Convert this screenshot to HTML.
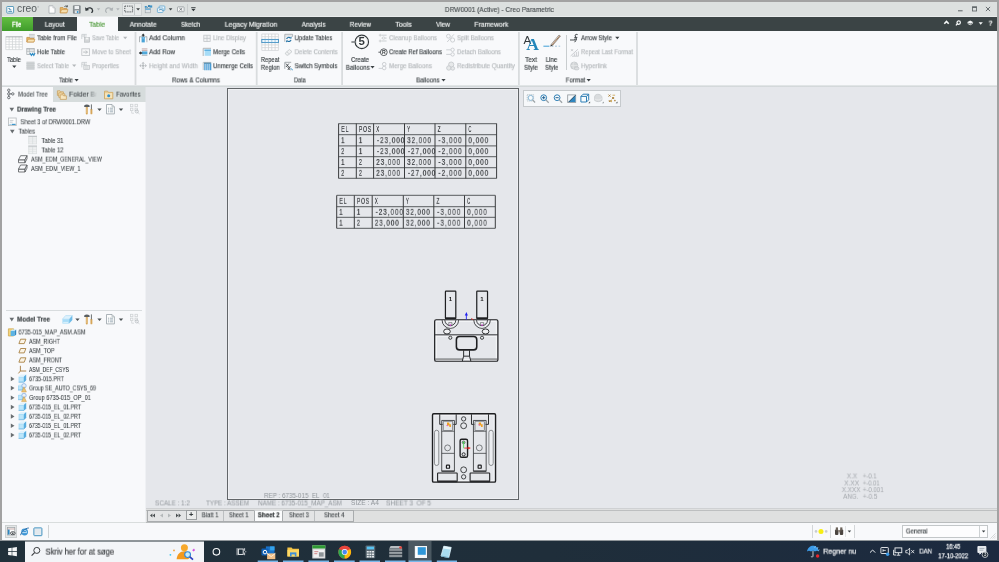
<!DOCTYPE html>
<html lang="en"><head><meta charset="utf-8"><title>DRW0001 (Active) - Creo Parametric</title>
<style>
html,body{margin:0;padding:0;}
body{width:999px;height:562px;overflow:hidden;background:#e5e7eb;font-family:"Liberation Sans",Arial,sans-serif;}
#app{position:relative;width:999px;height:562px;overflow:hidden;}
.t{will-change:transform;-webkit-text-stroke:.18px currentColor;}
.t{position:absolute;white-space:pre;line-height:10px;height:10px;color:#3c4245;transform-origin:0 50%;}
svg{overflow:visible;}
</style></head>
<body><div id="app">
<!-- window chrome -->
<div style="position:absolute;left:0px;top:0px;width:999px;height:541px;background:#e5e7eb;"></div>
<div style="position:absolute;left:2px;top:2px;width:995px;height:15.5px;background:#dce0df;"></div>
<div style="position:absolute;left:2px;top:16px;width:995px;height:1px;background:#e9ecec;"></div>
<div style="position:absolute;left:2px;top:17px;width:995px;height:13.5px;background:#3b4445;"></div>
<div style="position:absolute;left:2px;top:30.5px;width:995px;height:55.5px;background:#f8f9fb;"></div>
<div style="position:absolute;left:2px;top:85px;width:995px;height:2px;background:linear-gradient(#e8ebec,#cdd2d4);"></div>
<div style="position:absolute;left:2px;top:87px;width:143px;height:435px;background:#f8f9fb;"></div>
<div style="position:absolute;left:145px;top:87px;width:1px;height:435px;background:#eff1f4;"></div>
<div style="position:absolute;left:53px;top:87px;width:92px;height:15px;background:#d6dcdc;"></div>
<div style="position:absolute;left:145px;top:87px;width:1px;height:15px;background:#dde1e3;"></div>
<div style="position:absolute;left:146px;top:508px;width:851px;height:1px;background:#cfd1d3;"></div>
<div style="position:absolute;left:146px;top:509px;width:851px;height:13px;background:#dfe0e0;"></div>
<div style="position:absolute;left:146px;top:510px;width:851px;height:1px;background:#bdbfc0;"></div>
<div style="position:absolute;left:2px;top:522px;width:995px;height:18.5px;background:#f8f9fb;"></div>
<div style="position:absolute;left:2px;top:521.6px;width:144px;height:0.9px;background:#d9dddd;"></div>
<div style="position:absolute;left:146px;top:521.6px;width:851px;height:0.9px;background:#b9bcbd;"></div>
<div style="position:absolute;left:0px;top:0px;width:999px;height:2px;background:#a2a2a2;"></div>
<div style="position:absolute;left:0px;top:0px;width:2px;height:541px;background:#a2a2a2;"></div>
<div style="position:absolute;left:997px;top:0px;width:2px;height:541px;background:#a2a2a2;"></div>
<div style="position:absolute;left:0px;top:541px;width:999px;height:21px;background:linear-gradient(90deg,#20303a 0%,#1f2e3a 55%,#1c2a40 100%);"></div>
<div style="position:absolute;left:0px;top:540px;width:999px;height:1px;background:#8f9599;"></div>
<div class="titlebar">
<!-- title bar -->
<div class="t" style="left:444px;top:5px;font-size:7.8px;transform:translate(0.8px,0px) scaleX(0.851);color:#4f5557;">DRW0001 (Active) - Creo Parametric</div>
<div class="t" style="left:17px;top:3px;font-size:10px;transform:translate(0px,0.9px) scaleX(1.028);color:#545b5e;-webkit-text-stroke:0;">creo</div>
<svg style="position:absolute;left:37px;top:6px;" width="2" height="2" viewBox="0 0 2 2"><g transform="translate(0.4 0.2)"><circle cx=".7" cy=".7" r=".5" fill="none" stroke="#7a8184" stroke-width=".3"/></g></svg>
<div style="position:absolute;left:2px;top:17px;width:31px;height:13.5px;background:linear-gradient(#63be42,#3f9c2b);"></div>
<div style="position:absolute;left:77px;top:16.5px;width:40.5px;height:14px;background:#f8f9fb;"></div>
<div class="t" style="left:12px;top:19px;font-size:7.6px;transform:translate(0px,0.8px) scaleX(0.759);color:#ffffff;-webkit-text-stroke:.3px #fff;">File</div>
<div class="t" style="left:44px;top:19px;font-size:7.6px;transform:translate(0.7px,0.8px) scaleX(0.876);color:#f2f4f4;">Layout</div>
<div class="t" style="left:89px;top:19px;font-size:7.6px;transform:translate(0px,0.8px) scaleX(0.881);color:#4e9a3a;">Table</div>
<div class="t" style="left:129px;top:19px;font-size:7.6px;transform:translate(0.7px,0.8px) scaleX(0.887);color:#f2f4f4;">Annotate</div>
<div class="t" style="left:181px;top:19px;font-size:7.6px;transform:translate(0px,0.8px) scaleX(0.818);color:#f2f4f4;">Sketch</div>
<div class="t" style="left:224px;top:19px;font-size:7.6px;transform:translate(0.7px,0.8px) scaleX(0.909);color:#f2f4f4;">Legacy Migration</div>
<div class="t" style="left:301px;top:19px;font-size:7.6px;transform:translate(0.7px,0.8px) scaleX(0.848);color:#f2f4f4;">Analysis</div>
<div class="t" style="left:349px;top:19px;font-size:7.6px;transform:translate(0.7px,0.8px) scaleX(0.855);color:#f2f4f4;">Review</div>
<div class="t" style="left:395px;top:19px;font-size:7.6px;transform:translate(0.3px,0.8px) scaleX(0.924);color:#f2f4f4;">Tools</div>
<div class="t" style="left:436px;top:19px;font-size:7.6px;transform:translate(0px,0.8px) scaleX(0.857);color:#f2f4f4;">View</div>
<div class="t" style="left:474px;top:19px;font-size:7.6px;transform:translate(0.3px,0.8px) scaleX(0.895);color:#f2f4f4;">Framework</div>
<svg style="position:absolute;left:6px;top:6px;" width="9" height="8" viewBox="0 0 9 8"><g transform="translate(0.3 0)"><rect x=".5" y=".5" width="6.8" height="6.6" rx=".6" fill="#fbfdfe" stroke="#4a93b8" stroke-width=".9"/><path d="M2 2.4h1.4v1.4h1.6M2 5.4h3.8" stroke="#2f7ba3" stroke-width=".8" fill="none"/></g></svg>
<svg style="position:absolute;left:48px;top:5px;" width="8" height="9" viewBox="0 0 8 9"><g transform="translate(0.5 0.3)"><path d="M.5 .5H4.4L6.5 2.6V7.9H.5Z" fill="#fdfdfd" stroke="#a3a9ad" stroke-width=".8"/><path d="M4.4 .5V2.6H6.5" fill="#e4e7e9" stroke="#b4b9bc" stroke-width=".6"/></g></svg>
<svg style="position:absolute;left:59px;top:5px;" width="10" height="9" viewBox="0 0 10 9"><g transform="translate(0.8 0)"><path d="M.4 2.6H3.2L4 3.5H7V7.8H.4Z" fill="#e9b96a" stroke="#c48a3a" stroke-width=".7"/><path d="M.4 7.8L1.8 4.6H8.2L7 7.8Z" fill="#f6dfae" stroke="#c48a3a" stroke-width=".6"/><path d="M4.6 1.6C5.6 .8 6.6 .8 7.4 1.5M7.6 .3V1.8H6.1" stroke="#3c4245" stroke-width=".8" fill="none"/></g></svg>
<svg style="position:absolute;left:73px;top:5px;" width="8" height="9" viewBox="0 0 8 9"><g transform="translate(0 0.4)"><path d="M.4 .4H7.2V7.8H.4Z" fill="#8e9599" stroke="#6f777b" stroke-width=".7"/><rect x="1.6" y=".6" width="4.4" height="3" fill="#eef1f3"/><rect x="1.8" y="5" width="4" height="2.8" fill="#dfe3e5"/><rect x="3.9" y="5.6" width="1.4" height="2" fill="#3f9bd0"/></g></svg>
<svg style="position:absolute;left:85px;top:6px;" width="9" height="7" viewBox="0 0 9 7"><g transform="translate(0 0.4)"><path d="M1.6 2.8C3.6 .6 7.4 1.2 7.6 4.2C7.7 5.4 7 6 6.2 6" stroke="#33393c" stroke-width="1.3" fill="none"/><path d="M0 .8L.6 4.6L4.2 3.6Z" fill="#33393c"/></g></svg>
<svg style="position:absolute;left:96px;top:8px;" width="5" height="3" viewBox="0 0 5 3"><g transform="translate(0.8 0.3)"><path d="M0 0H3.4L1.7 2.2Z" fill="#b0b5b8"/></g></svg>
<svg style="position:absolute;left:104px;top:6px;" width="10" height="7" viewBox="0 0 10 7"><g transform="translate(0.6 0.4)"><path d="M7 2.8C5 .6 1.2 1.2 1 4.2C.9 5.4 1.6 6 2.4 6" stroke="#aeb3b6" stroke-width="1.2" fill="none"/><path d="M8.6 .8L8 4.6L4.4 3.6Z" fill="#aeb3b6"/></g></svg>
<svg style="position:absolute;left:116px;top:8px;" width="4" height="3" viewBox="0 0 4 3"><g transform="translate(0.2 0.3)"><path d="M0 0H3.4L1.7 2.2Z" fill="#b0b5b8"/></g></svg>
<div style="position:absolute;left:122px;top:3px;width:20px;height:13px;background:#e6e9e9;border:1px solid #cdd1d2;box-sizing:border-box;"></div>
<div style="position:absolute;left:134.2px;top:3.8px;width:0.8px;height:11px;background:#c3c8c9;"></div>
<svg style="position:absolute;left:124px;top:5px;" width="9" height="8" viewBox="0 0 9 8"><g transform="translate(0.3 0.6)"><rect x=".5" y=".5" width="7.8" height="5.8" fill="none" stroke="#3c4245" stroke-width=".9" stroke-dasharray="1.3 .9"/></g></svg>
<svg style="position:absolute;left:136px;top:8px;" width="4" height="3" viewBox="0 0 4 3"><g transform="translate(0.2 0.2)"><path d="M0 0H3.8L1.9 2.4Z" fill="#3c4245"/></g></svg>
<svg style="position:absolute;left:144px;top:5px;" width="9" height="9" viewBox="0 0 9 9"><g transform="translate(0.2 0)"><rect x="1" y="3.6" width="5.4" height="4.2" fill="#dfe4e7" stroke="#9aa1a5" stroke-width=".6"/><rect x="1" y="3.6" width="5.4" height="1.2" fill="#5aa7d6"/><path d="M3 2.6L5.4 .6M5.4 .6H3.8M5.4 .6V2.2" stroke="#2b78a8" stroke-width=".9" fill="none"/><rect x="5.6" y=".4" width="2.4" height="2.2" fill="#3f93c7"/><rect x=".6" y="1" width="2" height="1.8" fill="#3f93c7"/></g></svg>
<svg style="position:absolute;left:156px;top:5px;" width="10" height="9" viewBox="0 0 10 9"><g transform="translate(0.8 0.4)"><rect x="2.4" y=".6" width="5.6" height="4.4" rx=".6" fill="#eef6fb" stroke="#5aa3cf" stroke-width=".8"/><rect x=".6" y="2.6" width="5.6" height="4.4" rx=".6" fill="#f8fbfd" stroke="#5aa3cf" stroke-width=".8"/><path d="M2 4.8C3.4 3.8 5 4 6 5" stroke="#2b78a8" stroke-width=".8" fill="none"/></g></svg>
<svg style="position:absolute;left:168px;top:8px;" width="5" height="3" viewBox="0 0 5 3"><g transform="translate(0.8 0.2)"><path d="M0 0H3.6L1.8 2.3Z" fill="#3c4245"/></g></svg>
<svg style="position:absolute;left:177px;top:6px;" width="8" height="7" viewBox="0 0 8 7"><g transform="translate(0 0.4)"><rect x=".5" y=".5" width="6.6" height="4.8" rx=".5" fill="#f4f5f5" stroke="#8d9498" stroke-width=".7"/><path d="M2.4 1.7L5.2 4.1M5.2 1.7L2.4 4.1" stroke="#6a7175" stroke-width=".8"/></g></svg>
<div style="position:absolute;left:186.6px;top:4px;width:0.9px;height:10.8px;background:#c9cdce;"></div>
<svg style="position:absolute;left:191px;top:7px;" width="5" height="5" viewBox="0 0 5 5"><g transform="translate(0.2 0)"><path d="M0 0H4.4V.8H0ZM0 1.8H4.4L2.2 4.2Z" fill="#33393c"/></g></svg>
<svg style="position:absolute;left:958px;top:10px;" width="5" height="2" viewBox="0 0 5 2"><g transform="translate(0 0.3)"><rect width="4.6" height="1" fill="#5a6164"/></g></svg>
<svg style="position:absolute;left:972px;top:6px;" width="5" height="6" viewBox="0 0 5 6"><g transform="translate(0 0.4)"><rect x=".4" y=".4" width="4.2" height="4.2" fill="none" stroke="#5a6164" stroke-width=".8"/><rect x=".4" y=".4" width="4.2" height="1.1" fill="#5a6164"/></g></svg>
<svg style="position:absolute;left:985px;top:6px;" width="6" height="6" viewBox="0 0 6 6"><g transform="translate(0.6 0.6)"><path d="M.3 .3L4.5 4.5M4.5 .3L.3 4.5" stroke="#5a6164" stroke-width=".9"/></g></svg>
<svg style="position:absolute;left:943px;top:20px;" width="7" height="5" viewBox="0 0 7 5"><g transform="translate(0.8 0.6)"><path d="M.5 3.1L2.7 .9L4.9 3.1" stroke="#f7f9f9" stroke-width="1.6" fill="none"/></g></svg>
<svg style="position:absolute;left:955px;top:20px;" width="6" height="6" viewBox="0 0 6 6"><g transform="translate(0.4 0.4)"><circle cx="3.3" cy="2.2" r="1.7" fill="none" stroke="#f7f9f9" stroke-width="1.2"/><path d="M2.1 3.4L.5 5" stroke="#f7f9f9" stroke-width="1.3"/></g></svg>
<svg style="position:absolute;left:967px;top:20px;" width="7" height="6" viewBox="0 0 7 6"><g transform="translate(0 0.6)"><path d="M3.2 0L6.4 1.6L3.2 3.2L0 1.6Z" fill="#f4f6f6"/><path d="M.6 2.8L3.2 4.2L5.8 2.8" stroke="#f4f6f6" stroke-width=".8" fill="none"/></g></svg>
<svg style="position:absolute;left:978px;top:22px;" width="5" height="3" viewBox="0 0 5 3"><g transform="translate(0.6 0.2)"><path d="M0 0H4.2L2.1 2.6Z" fill="#f7f9f9"/></g></svg>
<div class="t" style="left:988px;top:18px;font-size:7.6px;transform:translate(0.6px,0.6px) scaleX(0.862);color:#f4f6f6;font-weight:700;">?</div>
</div>
<div class="ribbon">
<!-- ribbon -->
<svg style="position:absolute;left:134px;top:32px;" width="3" height="53" viewBox="0 0 3 53"><g transform="translate(0.6 0)"><rect width="1.8" height="53" fill="#d9dcde"/></g></svg>
<svg style="position:absolute;left:255px;top:32px;" width="3" height="53" viewBox="0 0 3 53"><g transform="translate(0.8 0)"><rect width="1.8" height="53" fill="#d9dcde"/></g></svg>
<svg style="position:absolute;left:341px;top:32px;" width="3" height="53" viewBox="0 0 3 53"><g transform="translate(0.2 0)"><rect width="1.8" height="53" fill="#d9dcde"/></g></svg>
<svg style="position:absolute;left:518px;top:32px;" width="2" height="53" viewBox="0 0 2 53"><rect width="1.8" height="53" fill="#d9dcde"/></svg>
<svg style="position:absolute;left:636px;top:32px;" width="2" height="53" viewBox="0 0 2 53"><g transform="translate(0.1 0)"><rect width="1.8" height="53" fill="#d9dcde"/></g></svg>
<div style="position:absolute;left:565.6px;top:35px;width:1px;height:35px;background:#c9cdcf;"></div>
<div class="t" style="left:37px;top:33px;font-size:7.4px;transform:translate(0px,0.2px) scaleX(0.824);">Table from File</div>
<div class="t" style="left:37px;top:47px;font-size:7.4px;transform:translate(0px,0.2px) scaleX(0.804);">Hole Table</div>
<div class="t" style="left:37px;top:61px;font-size:7.4px;transform:translate(0px,0.2px) scaleX(0.796);color:#b4b8bb;">Select Table</div>
<div class="t" style="left:92px;top:33px;font-size:7.4px;transform:translate(0px,0.2px) scaleX(0.740);color:#b4b8bb;">Save Table</div>
<div class="t" style="left:92px;top:47px;font-size:7.4px;transform:translate(0px,0.2px) scaleX(0.817);color:#b4b8bb;">Move to Sheet</div>
<div class="t" style="left:92px;top:61px;font-size:7.4px;transform:translate(0px,0.2px) scaleX(0.801);color:#b4b8bb;">Properties</div>
<div class="t" style="left:149px;top:33px;font-size:7.4px;transform:translate(0px,0.2px) scaleX(0.884);">Add Column</div>
<div class="t" style="left:149px;top:47px;font-size:7.4px;transform:translate(0px,0.2px) scaleX(0.866);">Add Row</div>
<div class="t" style="left:149px;top:61px;font-size:7.4px;transform:translate(0px,0.2px) scaleX(0.863);color:#b4b8bb;">Height and Width</div>
<div class="t" style="left:213px;top:33px;font-size:7.4px;transform:translate(0px,0.2px) scaleX(0.819);color:#b4b8bb;">Line Display</div>
<div class="t" style="left:213px;top:47px;font-size:7.4px;transform:translate(0px,0.2px) scaleX(0.811);">Merge Cells</div>
<div class="t" style="left:213px;top:61px;font-size:7.4px;transform:translate(0px,0.2px) scaleX(0.817);">Unmerge Cells</div>
<div class="t" style="left:294px;top:33px;font-size:7.4px;transform:translate(0.6px,0.2px) scaleX(0.799);">Update Tables</div>
<div class="t" style="left:294px;top:47px;font-size:7.4px;transform:translate(0.6px,0.2px) scaleX(0.812);color:#b4b8bb;">Delete Contents</div>
<div class="t" style="left:294px;top:61px;font-size:7.4px;transform:translate(0.6px,0.2px) scaleX(0.821);">Switch Symbols</div>
<div class="t" style="left:389px;top:33px;font-size:7.4px;transform:translate(0px,0.2px) scaleX(0.827);color:#b4b8bb;">Cleanup Balloons</div>
<div class="t" style="left:389px;top:47px;font-size:7.4px;transform:translate(0px,0.2px) scaleX(0.800);">Create Ref Balloons</div>
<div class="t" style="left:389px;top:61px;font-size:7.4px;transform:translate(0px,0.2px) scaleX(0.836);color:#b4b8bb;">Merge Balloons</div>
<div class="t" style="left:457px;top:33px;font-size:7.4px;transform:translate(0px,0.2px) scaleX(0.825);color:#b4b8bb;">Split Balloons</div>
<div class="t" style="left:457px;top:47px;font-size:7.4px;transform:translate(0px,0.2px) scaleX(0.816);color:#b4b8bb;">Detach Balloons</div>
<div class="t" style="left:457px;top:61px;font-size:7.4px;transform:translate(0px,0.2px) scaleX(0.839);color:#b4b8bb;">Redistribute Quantity</div>
<div class="t" style="left:581px;top:33px;font-size:7.4px;transform:translate(0px,0.2px) scaleX(0.819);">Arrow Style</div>
<div class="t" style="left:581px;top:47px;font-size:7.4px;transform:translate(0px,0.2px) scaleX(0.795);color:#b4b8bb;">Repeat Last Format</div>
<div class="t" style="left:581px;top:61px;font-size:7.4px;transform:translate(0px,0.2px) scaleX(0.843);color:#b4b8bb;">Hyperlink</div>
<div class="t" style="left:7px;top:55px;font-size:7.4px;transform:translate(0px,0px) scaleX(0.791);">Table</div>
<div class="t" style="left:260px;top:55px;font-size:7.4px;transform:translate(0.8px,0px) scaleX(0.779);">Repeat</div>
<div class="t" style="left:260px;top:62px;font-size:7.4px;transform:translate(0.8px,0.8px) scaleX(0.810);">Region</div>
<div class="t" style="left:351px;top:55px;font-size:7.4px;transform:translate(0px,0px) scaleX(0.810);">Create</div>
<div class="t" style="left:345px;top:62px;font-size:7.4px;transform:translate(0.8px,0.8px) scaleX(0.845);">Balloons</div>
<div class="t" style="left:525px;top:55px;font-size:7.4px;transform:translate(0px,0px) scaleX(0.884);">Text</div>
<div class="t" style="left:524px;top:62px;font-size:7.4px;transform:translate(0px,0.8px) scaleX(0.851);">Style</div>
<div class="t" style="left:545px;top:55px;font-size:7.4px;transform:translate(0.7px,0px) scaleX(0.836);">Line</div>
<div class="t" style="left:545px;top:62px;font-size:7.4px;transform:translate(0px,0.8px) scaleX(0.815);">Style</div>
<div class="t" style="left:59px;top:75px;font-size:7.4px;transform:translate(0px,0.4px) scaleX(0.791);">Table</div>
<div class="t" style="left:172px;top:75px;font-size:7.4px;transform:translate(0px,0.4px) scaleX(0.846);">Rows &amp; Columns</div>
<div class="t" style="left:293px;top:75px;font-size:7.4px;transform:translate(0.8px,0.4px) scaleX(0.768);">Data</div>
<div class="t" style="left:416px;top:75px;font-size:7.4px;transform:translate(0.2px,0.4px) scaleX(0.824);">Balloons</div>
<div class="t" style="left:565px;top:75px;font-size:7.4px;transform:translate(0.7px,0.4px) scaleX(0.841);">Format</div>
<svg style="position:absolute;left:12px;top:65px;" width="5" height="4" viewBox="0 0 4.72 3.77"><g transform="translate(0.17 0.5)"><path d="M0 0H4L2 2.4Z" fill="#3c4245"/></g></svg>
<svg style="position:absolute;left:74px;top:78px;" width="5" height="4" viewBox="0 0 4.72 3.77"><g transform="translate(0.45 0.88)"><path d="M0 0H4L2 2.4Z" fill="#3c4245"/></g></svg>
<svg style="position:absolute;left:441px;top:78px;" width="5" height="4" viewBox="0 0 4.72 3.77"><g transform="translate(0.36 0.88)"><path d="M0 0H4L2 2.4Z" fill="#3c4245"/></g></svg>
<svg style="position:absolute;left:586px;top:78px;" width="5" height="4" viewBox="0 0 4.72 3.77"><g transform="translate(0.55 0.88)"><path d="M0 0H4L2 2.4Z" fill="#3c4245"/></g></svg>
<svg style="position:absolute;left:370px;top:66px;" width="5" height="3" viewBox="0 0 4.72 2.83"><g transform="translate(0.36 0.03)"><path d="M0 0H4L2 2.4Z" fill="#3c4245"/></g></svg>
<svg style="position:absolute;left:72px;top:64px;" width="5" height="4" viewBox="0 0 4.72 3.77"><g transform="translate(0.08 0.5)"><path d="M0 0H4L2 2.4Z" fill="#b4b8bb"/></g></svg>
<svg style="position:absolute;left:123px;top:36px;" width="5" height="4" viewBox="0 0 4.72 3.77"><g transform="translate(0.08 0.69)"><path d="M0 0H4L2 2.4Z" fill="#b4b8bb"/></g></svg>
<svg style="position:absolute;left:615px;top:36px;" width="5" height="4" viewBox="0 0 4.72 3.77"><g transform="translate(0.17 0.69)"><path d="M0 0H4L2 2.4Z" fill="#3c4245"/></g></svg>
<svg style="position:absolute;left:5px;top:36px;" width="18" height="14" viewBox="0 0 18 14"><g transform="translate(0.8 0.6)"><rect width="16.6" height="13" fill="#fff"/><path d="M0 0V13M3.32 0V13M6.64 0V13M9.96 0V13M13.28 0V13M16.6 0V13M0 0H16.6M0 2.6H16.6M0 5.2H16.6M0 7.8H16.6M0 10.4H16.6M0 13H16.6" stroke="#d2d5d8" stroke-width="0.8" fill="none"/><path d="M0 .3H16.6" stroke="#a7adb1" stroke-width=".9"/></g></svg>
<svg style="position:absolute;left:26px;top:33px;" width="10" height="10" viewBox="0 0 10 10"><g transform="translate(0.4 0.8)"><path d="M2.6 .6H8.4M2.6 2.1H8.4M2.6 3.6H8.4" stroke="#9aa1a5" stroke-width=".55"/><path d="M.4 3.6H3L3.8 4.6H7.6V8.2H.4Z" fill="#e8b765" stroke="#c28a3c" stroke-width=".7"/><path d="M.5 8.2L1.8 5.4H8.5L7.4 8.2Z" fill="#f7e3b6" stroke="#c28a3c" stroke-width=".6"/></g></svg>
<svg style="position:absolute;left:26px;top:48px;" width="10" height="9" viewBox="0 0 10 9"><g transform="translate(0.4 0)"><rect x=".4" y=".4" width="7.4" height="6" fill="#f3f5f6" stroke="#9da3a7" stroke-width=".7"/><path d="M.4 1.8H7.8M.4 3.6H7.8M3 .4V6.4" stroke="#aab0b4" stroke-width=".6"/><path d="M3.6 5L5 7.4L6.2 5.6L7.4 7.4L8.6 5" stroke="#2f8ec8" stroke-width="1.1" fill="none"/></g></svg>
<svg style="position:absolute;left:26px;top:61px;" width="9" height="9" viewBox="0 0 9 9"><g transform="translate(0.4 0.6)"><rect width="8.2" height="8.2" fill="#cfd3d5"/><path d="M0 2H8.2M0 4.1H8.2M0 6.2H8.2" stroke="#c3c7ca" stroke-width=".6"/></g></svg>
<svg style="position:absolute;left:81px;top:34px;" width="10" height="9" viewBox="0 0 10 9"><g transform="translate(0.4 0)"><path d="M.4 .4H5.4M.4 2H5.4M.4 .4V5M2.8 .4V3.4" stroke="#c2c6c9" stroke-width=".7" fill="none"/><rect x="3.2" y="3.4" width="5" height="4.8" fill="#d3d6d8" stroke="#b9bec1" stroke-width=".7"/><rect x="4.4" y="3.6" width="2.6" height="1.8" fill="#f4f5f6"/></g></svg>
<svg style="position:absolute;left:81px;top:48px;" width="10" height="8" viewBox="0 0 10 8"><g transform="translate(0.4 0.4)"><rect x=".4" y=".4" width="7.8" height="6.6" fill="#f6f7f8" stroke="#c0c4c7" stroke-width=".8"/><path d="M1.8 3.7H6M4.4 2.1L6 3.7L4.4 5.3" stroke="#b4b9bc" stroke-width=".9" fill="none"/></g></svg>
<svg style="position:absolute;left:81px;top:61px;" width="10" height="9" viewBox="0 0 10 9"><g transform="translate(0.4 0.8)"><path d="M.4 .6H5.6M.4 2.4H5.6M.4 .6V5.6M3 .6V3.6" stroke="#c2c6c9" stroke-width=".7" fill="none"/><rect x="2.4" y="3.6" width="5.6" height="4" fill="#eceeef" stroke="#bfc3c6" stroke-width=".7"/><path d="M3.4 5H7M3.4 6.4H7" stroke="#c6cacd" stroke-width=".6"/></g></svg>
<svg style="position:absolute;left:139px;top:33px;" width="9" height="10" viewBox="0 0 9 10"><g transform="translate(0 0.6)"><path d="M.5 3V8.6M7.9 3V8.6M.5 3.2H8" stroke="#9da3a7" stroke-width=".8" fill="none"/><rect x="2.6" y="3.2" width="3.2" height="5.6" fill="#4aa3d6"/><path d="M4.2 3.2V5.2" stroke="#dff0fa" stroke-width=".5"/><path d="M4.2 0L6 2H5V3H3.4V2H2.4Z" fill="#33393c"/></g></svg>
<svg style="position:absolute;left:138px;top:48px;" width="10" height="8" viewBox="0 0 10 8"><g transform="translate(0.8 0.4)"><path d="M3 .5H8.6M3 2H8.6" stroke="#b18b86" stroke-width=".7"/><rect x="3" y="3" width="5.6" height="3" fill="#4fa8da"/><path d="M3 7H8.6" stroke="#9da3a7" stroke-width=".7"/><path d="M0 4.6L2 2.8V3.9H3.4V5.3H2V6.4Z" fill="#2a2f32"/></g></svg>
<svg style="position:absolute;left:139px;top:61px;" width="8" height="9" viewBox="0 0 8 9"><g transform="translate(0.2 0.8)"><path d="M3.9 0L5.5 1.9H2.3ZM3.9 7.8L5.5 5.9H2.3ZM0 3.9L1.9 2.3V5.5ZM7.8 3.9L5.9 2.3V5.5Z" fill="#b9bdc0"/><path d="M3.9 1.6V6.2M1.6 3.9H6.2" stroke="#c6cacd" stroke-width=".8"/><circle cx="3.9" cy="3.9" r="1.1" fill="#b4b9bc"/></g></svg>
<svg style="position:absolute;left:203px;top:34px;" width="8" height="8" viewBox="0 0 8 8"><g transform="translate(0.4 0.8)"><rect x=".4" y=".4" width="6.4" height="6.4" fill="#f1f2f3" stroke="#c3c7ca" stroke-width=".8"/><path d="M3.6 .4V6.8M.4 3.6H6.8" stroke="#c3c7ca" stroke-width=".8"/></g></svg>
<svg style="position:absolute;left:202px;top:47px;" width="10" height="10" viewBox="0 0 10 10"><g transform="translate(0.8 0.8)"><path d="M.4 8.2V.5H8.2" stroke="#9da3a7" stroke-width=".8" fill="none"/><rect x="1.6" y="1.8" width="6.6" height="6.2" fill="#a6dcf7"/><rect x="1.6" y="1.8" width="6.6" height="1.2" fill="#4fa8dc"/><path d="M1.8 3V8" stroke="#eef8fd" stroke-width=".6"/></g></svg>
<svg style="position:absolute;left:203px;top:61px;" width="9" height="10" viewBox="0 0 9 10"><g transform="translate(0 0.8)"><path d="M.2 8.2V.6H8.2" stroke="#a9afb3" stroke-width=".7" fill="none"/><rect x="1" y=".9" width="7.2" height="1" fill="#2d6f98"/><path d="M1.9 1.9V8.4M3.9 1.9V8.4M5.9 1.9V8.4M7.7 1.9V8.4" stroke="#2f8fd0" stroke-width="1.15"/></g></svg>
<svg style="position:absolute;left:261px;top:34px;" width="18" height="17" viewBox="0 0 18 17"><g transform="translate(0.8 0)"><rect width="16.6" height="16.4" fill="#fff"/><path d="M0 0V16.4M3.32 0V16.4M6.64 0V16.4M9.96 0V16.4M13.28 0V16.4M16.6 0V16.4M0 0H16.6M0 2.73H16.6M0 5.47H16.6M0 8.2H16.6M0 10.93H16.6M0 13.67H16.6M0 16.4H16.6" stroke="#d0d3d6" stroke-width="0.8" fill="none"/><rect x="0" y="5.4" width="16.6" height="3.2" fill="#eef6fc" stroke="#3f8fc2" stroke-width=".9"/><path d="M3.3 5.5V8.3M6.6 5.5V8.3M10 5.5V8.3M13.3 5.5V8.3" stroke="#6aaed6" stroke-width=".6"/></g></svg>
<svg style="position:absolute;left:284px;top:33px;" width="9" height="10" viewBox="0 0 9 10"><g transform="translate(0.4 0.8)"><path d="M.4 8V.5H8.2V3" stroke="#9da3a7" stroke-width=".8" fill="none"/><path d="M.4 2.2H8.2" stroke="#b9bec1" stroke-width=".6"/><path d="M2.2 5.2C2.6 3.6 4.6 3 5.8 4M6.6 6C6.2 7.6 4.2 8.2 3 7.2" stroke="#1f6fa3" stroke-width="1.1" fill="none"/><path d="M5 4.6L7.2 4.6L7 2.6ZM3.8 6.6L1.6 6.6L1.8 8.6Z" fill="#1f6fa3"/></g></svg>
<svg style="position:absolute;left:284px;top:49px;" width="9" height="7" viewBox="0 0 9 7"><g transform="translate(0.8 0)"><path d="M.4 4.2L4.6 .5L7.2 2.6L3.2 6.2H1.8Z" fill="#f0f1f2" stroke="#c2c6c9" stroke-width=".8"/><path d="M2 2.8L4.6 5" stroke="#c2c6c9" stroke-width=".7"/></g></svg>
<svg style="position:absolute;left:284px;top:61px;" width="10" height="10" viewBox="0 0 10 10"><g transform="translate(0.4 0.8)"><path d="M.4 7V.5H6.8" stroke="#8d9498" stroke-width=".8" fill="none"/><path d="M1.6 1.8L4.4 5.2M4.4 1.8L1.6 5.2M3 5L6 8.4M6 4.4L3.4 8.2" stroke="#33393c" stroke-width=".8"/><path d="M6 6.4L8.4 8.2" stroke="#2f8ec8" stroke-width=".9"/></g></svg>
<svg style="position:absolute;left:351px;top:34px;will-change:transform;" width="19" height="16" viewBox="0 0 19 16"><g transform="translate(0.4 0.2)"><circle cx="10.4" cy="7.7" r="6.7" fill="#fdfdfd" stroke="#33393c" stroke-width="1.2"/><circle cx="10.4" cy="7.7" r="5.6" fill="none" stroke="#d8dbdd" stroke-width=".7"/><path d="M0 7.8H3.2" stroke="#33393c" stroke-width="1"/><text x="10.4" y="11.3" font-size="10.2" font-family="Liberation Sans,Arial,sans-serif" font-weight="700" fill="#33393c" text-anchor="middle" transform="translate(10.4 0) scale(1.12 1) translate(-10.4 0)">5</text></g></svg>
<svg style="position:absolute;left:378px;top:33px;" width="10" height="10" viewBox="0 0 10 10"><g transform="translate(0.6 0.8)"><path d="M3 1.4H8M3 4.3H8M3 7.2H8" stroke="#c6cacd" stroke-width=".9"/><path d="M1.6 0V2.8M.2 1.4H3M1.6 5.8V8.6M.2 7.2H3" stroke="#c6cacd" stroke-width=".8"/><circle cx="5" cy="4.3" r="1.3" fill="#eef0f1" stroke="#c6cacd" stroke-width=".6"/></g></svg>
<svg style="position:absolute;left:378px;top:48px;will-change:transform;" width="10" height="9" viewBox="0 0 10 9"><g transform="translate(0.4 0.2)"><circle cx="5.4" cy="4" r="3.4" fill="#fdfdfd" stroke="#33393c" stroke-width=".8"/><path d="M0 4H2" stroke="#33393c" stroke-width=".8"/><text x="5.4" y="5.9" font-size="5.2" font-family="Liberation Sans,Arial,sans-serif" font-weight="700" fill="#33393c" text-anchor="middle">R</text></g></svg>
<svg style="position:absolute;left:378px;top:62px;" width="10" height="9" viewBox="0 0 10 9"><g transform="translate(0.6 0)"><circle cx="5.6" cy="2.2" r="1.8" fill="none" stroke="#c3c7ca" stroke-width=".8"/><circle cx="5.6" cy="6" r="1.8" fill="none" stroke="#c3c7ca" stroke-width=".8"/><path d="M0 6.4H3.6" stroke="#c3c7ca" stroke-width=".8"/></g></svg>
<svg style="position:absolute;left:446px;top:33px;" width="10" height="10" viewBox="0 0 10 10"><g transform="translate(0 0.8)"><circle cx="2.4" cy="2.4" r="1.9" fill="none" stroke="#c3c7ca" stroke-width=".8"/><circle cx="6.6" cy="6.2" r="2.1" fill="none" stroke="#c3c7ca" stroke-width=".8"/><path d="M7.8 .6L1.2 8.2" stroke="#c3c7ca" stroke-width=".8"/></g></svg>
<svg style="position:absolute;left:446px;top:47px;" width="10" height="10" viewBox="0 0 10 10"><g transform="translate(0.2 0.8)"><circle cx="6.4" cy="2" r="1.7" fill="none" stroke="#c3c7ca" stroke-width=".8"/><circle cx="6.4" cy="6.6" r="1.7" fill="none" stroke="#c3c7ca" stroke-width=".8"/><path d="M0 2H4.6M0 6.6H4.6" stroke="#c3c7ca" stroke-width=".8"/></g></svg>
<svg style="position:absolute;left:446px;top:61px;" width="10" height="10" viewBox="0 0 10 10"><g transform="translate(0.2 0.6)"><circle cx="5" cy="3" r="2.6" fill="#e7e9ea" stroke="#c3c7ca" stroke-width=".8"/><circle cx="2.6" cy="6.4" r="2.2" fill="#e7e9ea" stroke="#c3c7ca" stroke-width=".8"/><circle cx="6.6" cy="6.8" r="1.8" fill="#e7e9ea" stroke="#c3c7ca" stroke-width=".8"/></g></svg>
<svg style="position:absolute;left:523px;top:34px;will-change:transform;" width="16" height="17" viewBox="0 0 16 17"><g transform="translate(0.4 0)"><text x="0" y="10" font-size="11.5" font-family="Liberation Sans,Arial,sans-serif" fill="#33393c">A</text><text x="2.9" y="15.8" font-size="17.6" font-family="Liberation Serif,serif" font-weight="700" fill="#2386ba">A</text></g></svg>
<svg style="position:absolute;left:543px;top:33px;" width="19" height="16" viewBox="0 0 19 16"><g transform="translate(0 0.6)"><path d="M.4 12.6H6.4" stroke="#3f9fd6" stroke-width="1"/><path d="M8.6 12.6H10.4M12 12.6H14M15.6 12.6H17.2" stroke="#8fb9d3" stroke-width=".8"/><path d="M8 11L16 1.4L17.4 2.6L9.4 12.2Z" fill="#f4f1ee" stroke="#6a6059" stroke-width=".6"/><path d="M9 11.4L16.8 2.2" stroke="#9a6a42" stroke-width=".9"/><path d="M8 11L7.2 13L9.4 12.2Z" fill="#2b2f31"/></g></svg>
<svg style="position:absolute;left:570px;top:33px;" width="9" height="11" viewBox="0 0 9 11"><g transform="translate(0 0.6)"><path d="M0 6.4H5" stroke="#33393c" stroke-width=".9"/><path d="M7.6 1C5.4 .2 4.6 1.6 5.6 3.2C6.6 4.8 6.6 6.6 4.6 8.6" stroke="#33393c" stroke-width="1" fill="none"/><path d="M4.2 3.8H7.4M4 5.6H7" stroke="#33393c" stroke-width=".8"/></g></svg>
<svg style="position:absolute;left:570px;top:48px;" width="9" height="9" viewBox="0 0 9 9"><path d="M.6 8L8 1.2M2 8.2H8.4V3.4M1 1.2L3 3.2M3 1.2L1 3.2M4.4 8V5.6M6.4 8V4" stroke="#c6cacd" stroke-width=".9" fill="none"/></svg>
<svg style="position:absolute;left:570px;top:61px;" width="10" height="10" viewBox="0 0 10 10"><g transform="translate(0.2 0.6)"><circle cx="4" cy="4" r="3.6" fill="#d3d6d8" stroke="#c0c4c7" stroke-width=".7"/><path d="M.6 4H7.4M4 .4C2.4 2 2.4 6 4 7.6" stroke="#eceeef" stroke-width=".6" fill="none"/><rect x="4.4" y="5.4" width="4.2" height="2.8" rx="1.2" fill="#dfe1e3" stroke="#c0c4c7" stroke-width=".8"/></g></svg>
</div>
<div class="navigator">
<!-- left panel -->
<div class="t" style="left:18px;top:89px;font-size:7.4px;transform:translate(0px,0.6px) scaleX(0.810);-webkit-text-stroke:.08px currentColor;">Model Tree</div>
<div style="position:absolute;left:68px;top:88px;width:28.5px;height:12px;overflow:hidden;-webkit-mask-image:linear-gradient(90deg,#000 72%,transparent 100%);mask-image:linear-gradient(90deg,#000 72%,transparent 100%);"><div class="t" style="left:1px;top:1px;font-size:7.4px;transform:translate(0px,0.6px) scaleX(0.941);-webkit-text-stroke:.08px currentColor;">Folder Bro</div></div>
<div class="t" style="left:116px;top:89px;font-size:7.4px;transform:translate(0.2px,0.6px) scaleX(0.802);-webkit-text-stroke:.08px currentColor;">Favorites</div>
<div class="t" style="left:17px;top:104px;font-size:7.4px;transform:translate(0px,0.6px) scaleX(0.839);font-weight:700;">Drawing Tree</div>
<div class="t" style="left:20px;top:117px;font-size:7.4px;transform:translate(0.5px,0.2px) scaleX(0.783);-webkit-text-stroke:.08px currentColor;">Sheet 3 of DRW0001.DRW</div>
<div class="t" style="left:18px;top:126px;font-size:7.4px;transform:translate(0.5px,0.6px) scaleX(0.771);-webkit-text-stroke:.08px currentColor;">Tables</div>
<div class="t" style="left:41px;top:136px;font-size:7.4px;transform:translate(0.5px,0px) scaleX(0.786);-webkit-text-stroke:.08px currentColor;">Table 31</div>
<div class="t" style="left:41px;top:145px;font-size:7.4px;transform:translate(0.5px,0.4px) scaleX(0.786);-webkit-text-stroke:.08px currentColor;">Table 12</div>
<div class="t" style="left:31px;top:154px;font-size:7.4px;transform:translate(0px,0.6px) scaleX(0.716);-webkit-text-stroke:.08px currentColor;">ASM_EDM_GENERAL_VIEW</div>
<div class="t" style="left:31px;top:163px;font-size:7.4px;transform:translate(0px,0.9px) scaleX(0.729);-webkit-text-stroke:.08px currentColor;">ASM_EDM_VIEW_1</div>
<div style="position:absolute;left:6px;top:310.3px;width:136px;height:0.8px;background:#d8dcde;"></div>
<div class="t" style="left:17px;top:314px;font-size:7.4px;transform:translate(0px,0.6px) scaleX(0.854);font-weight:700;">Model Tree</div>
<div class="t" style="left:18px;top:327px;font-size:7.4px;transform:translate(0.5px,0.4px) scaleX(0.747);-webkit-text-stroke:.08px currentColor;">6735-015_MAP_ASM.ASM</div>
<div class="t" style="left:29px;top:336px;font-size:7.4px;transform:translate(0px,0.8px) scaleX(0.718);-webkit-text-stroke:.08px currentColor;">ASM_RIGHT</div>
<div class="t" style="left:29px;top:346px;font-size:7.4px;transform:translate(0px,0.1px) scaleX(0.724);-webkit-text-stroke:.08px currentColor;">ASM_TOP</div>
<div class="t" style="left:29px;top:355px;font-size:7.4px;transform:translate(0px,0.4px) scaleX(0.723);-webkit-text-stroke:.08px currentColor;">ASM_FRONT</div>
<div class="t" style="left:29px;top:365px;font-size:7.4px;transform:translate(0px,0px) scaleX(0.675);-webkit-text-stroke:.08px currentColor;">ASM_DEF_CSYS</div>
<div class="t" style="left:29px;top:374px;font-size:7.4px;transform:translate(0px,0.2px) scaleX(0.729);-webkit-text-stroke:.08px currentColor;">6735-015.PRT</div>
<div class="t" style="left:29px;top:383px;font-size:7.4px;transform:translate(0px,0.4px) scaleX(0.715);-webkit-text-stroke:.08px currentColor;">Group SE_AUTO_CSYS_69</div>
<div class="t" style="left:29px;top:393px;font-size:7.4px;transform:translate(0px,0px) scaleX(0.765);-webkit-text-stroke:.08px currentColor;">Group 6735-015_OP_01</div>
<div class="t" style="left:29px;top:402px;font-size:7.4px;transform:translate(0px,0.4px) scaleX(0.707);-webkit-text-stroke:.08px currentColor;">6735-015_EL_01.PRT</div>
<div class="t" style="left:29px;top:411px;font-size:7.4px;transform:translate(0px,0.7px) scaleX(0.707);-webkit-text-stroke:.08px currentColor;">6735-015_EL_02.PRT</div>
<div class="t" style="left:29px;top:421px;font-size:7.4px;transform:translate(0px,0px) scaleX(0.707);-webkit-text-stroke:.08px currentColor;">6735-015_EL_01.PRT</div>
<div class="t" style="left:29px;top:430px;font-size:7.4px;transform:translate(0px,0.4px) scaleX(0.707);-webkit-text-stroke:.08px currentColor;">6735-015_EL_02.PRT</div>
<svg style="position:absolute;left:9px;top:107px;" width="6" height="5" viewBox="0 0 6 5"><g transform="translate(0.5 0.8)"><path d="M0 0H4.6L2.3 3.6Z" fill="#686d70"/></g></svg>
<svg style="position:absolute;left:10px;top:129px;" width="5" height="5" viewBox="0 0 5 5"><g transform="translate(0 0.8)"><path d="M0 0H4.6L2.3 3.6Z" fill="#686d70"/></g></svg>
<svg style="position:absolute;left:9px;top:317px;" width="6" height="5" viewBox="0 0 6 5"><g transform="translate(0.5 0.8)"><path d="M0 0H4.6L2.3 3.6Z" fill="#686d70"/></g></svg>
<svg style="position:absolute;left:10px;top:376px;" width="5" height="6" viewBox="0 0 5 6"><g transform="translate(0.8 0.6)"><path d="M0 0L3.7 2.3L0 4.6Z" fill="#6a6f72"/></g></svg>
<svg style="position:absolute;left:10px;top:385px;" width="5" height="6" viewBox="0 0 5 6"><g transform="translate(0.8 0.8)"><path d="M0 0L3.7 2.3L0 4.6Z" fill="#6a6f72"/></g></svg>
<svg style="position:absolute;left:10px;top:395px;" width="5" height="6" viewBox="0 0 5 6"><g transform="translate(0.8 0.4)"><path d="M0 0L3.7 2.3L0 4.6Z" fill="#6a6f72"/></g></svg>
<svg style="position:absolute;left:10px;top:404px;" width="5" height="6" viewBox="0 0 5 6"><g transform="translate(0.8 0.8)"><path d="M0 0L3.7 2.3L0 4.6Z" fill="#6a6f72"/></g></svg>
<svg style="position:absolute;left:10px;top:414px;" width="5" height="5" viewBox="0 0 5 5"><g transform="translate(0.8 0.1)"><path d="M0 0L3.7 2.3L0 4.6Z" fill="#6a6f72"/></g></svg>
<svg style="position:absolute;left:10px;top:423px;" width="5" height="6" viewBox="0 0 5 6"><g transform="translate(0.8 0.4)"><path d="M0 0L3.7 2.3L0 4.6Z" fill="#6a6f72"/></g></svg>
<svg style="position:absolute;left:10px;top:432px;" width="5" height="6" viewBox="0 0 5 6"><g transform="translate(0.8 0.8)"><path d="M0 0L3.7 2.3L0 4.6Z" fill="#6a6f72"/></g></svg>
<svg style="position:absolute;left:97px;top:108px;" width="5" height="4" viewBox="0 0 5 4"><g transform="translate(0.3 0.4)"><path d="M0 0H4.4L2.2 2.7Z" fill="#4a5053"/></g></svg>
<svg style="position:absolute;left:118px;top:108px;" width="6" height="4" viewBox="0 0 6 4"><g transform="translate(0.8 0.4)"><path d="M0 0H4.4L2.2 2.7Z" fill="#4a5053"/></g></svg>
<svg style="position:absolute;left:75px;top:318px;" width="5" height="4" viewBox="0 0 5 4"><g transform="translate(0.3 0.4)"><path d="M0 0H4.4L2.2 2.7Z" fill="#4a5053"/></g></svg>
<svg style="position:absolute;left:97px;top:318px;" width="5" height="4" viewBox="0 0 5 4"><g transform="translate(0.3 0.4)"><path d="M0 0H4.4L2.2 2.7Z" fill="#4a5053"/></g></svg>
<svg style="position:absolute;left:118px;top:318px;" width="6" height="4" viewBox="0 0 6 4"><g transform="translate(0.8 0.4)"><path d="M0 0H4.4L2.2 2.7Z" fill="#4a5053"/></g></svg>
<svg style="position:absolute;left:7px;top:88px;" width="8" height="12" viewBox="0 0 8 12"><g transform="translate(0 0.6)"><g fill="#f8f9fb" stroke="#50565a" stroke-width=".8"><path d="M1.8 2.4V8.4M1.8 5.3H5" fill="none"/><circle cx="1.8" cy="1.6" r="1.2"/><circle cx="1.8" cy="5.3" r="1.2"/><circle cx="1.8" cy="9" r="1.2"/><circle cx="5.8" cy="5.3" r="1.2"/></g></g></svg>
<svg style="position:absolute;left:57px;top:89px;" width="10" height="11" viewBox="0 0 10 11"><g transform="translate(0 0.4)"><g stroke="#c49a55" stroke-width=".7"><path d="M.4 1.4H3L3.8 2.4H6.4V6H.4Z" fill="#f1d9a6"/><path d="M1.8 3.4H4.4L5.2 4.4H7.8V8H1.8Z" fill="#f4dfb3"/><path d="M3.2 5.4H5.8L6.6 6.4H9.4V10H3.2Z" fill="#f7e6c0"/></g></g></svg>
<svg style="position:absolute;left:104px;top:90px;" width="10" height="10" viewBox="0 0 10 10"><path d="M.5 1.2H3.6L4.4 2.4H8.8V8.8H.5Z" fill="#f6e3b8" stroke="#c9a057" stroke-width=".8"/><path d="M.5 2.6H8.8" stroke="#dcb877" stroke-width=".6"/><circle cx="4.7" cy="5.7" r="1.5" fill="#2d8fd0"/></svg>
<svg style="position:absolute;left:84px;top:104px;" width="10" height="11" viewBox="0 0 10 11"><path d="M2.8 2.8V9.4" stroke="#d6a65a" stroke-width="2" stroke-linecap="round"/><path d="M2.8 3.4V9" stroke="#ecd09a" stroke-width=".7"/><path d="M.2 1.4C1.6 .3 4 .3 5.6 1.4V3H.2Z" fill="#5a5f62"/><path d="M7.4 5.6V9.4" stroke="#d6a65a" stroke-width="1.9" stroke-linecap="round"/><path d="M7.4 .4V5.4" stroke="#6a6f72" stroke-width="1"/></svg>
<svg style="position:absolute;left:106px;top:104px;" width="9" height="11" viewBox="0 0 9 11"><path d="M.5 .5H6L8.4 2.9V9.9H.5Z" fill="#fbfcfc" stroke="#98a2a8" stroke-width=".8"/><path d="M6 .5V2.9H8.4" fill="none" stroke="#98a2a8" stroke-width=".6"/><path d="M2 4.2H3.2M4 4.2H7M2 6H3.2M4 6H7M2 7.8H3.2M4 7.8H7" stroke="#8d9da8" stroke-width=".8"/></svg>
<svg style="position:absolute;left:130px;top:103px;" width="11" height="12" viewBox="0 0 11 12"><g transform="translate(0 0.8)"><g stroke="#cfd3d5" stroke-width=".8" fill="none"><rect x=".5" y=".5" width="2.4" height="2.4"/><rect x=".5" y="4.4" width="2.4" height="2.4"/><rect x="5" y=".5" width="2.4" height="2.4"/><rect x="5" y="4.4" width="2.4" height="2.4"/><path d="M1.7 7V9.4H4M6.4 7.6L9.6 10.2"/><circle cx="6.8" cy="7.6" r="1.6" stroke="#b9bec1"/></g></g></svg>
<svg style="position:absolute;left:84px;top:314px;" width="10" height="11" viewBox="0 0 10 11"><path d="M2.8 2.8V9.4" stroke="#d6a65a" stroke-width="2" stroke-linecap="round"/><path d="M2.8 3.4V9" stroke="#ecd09a" stroke-width=".7"/><path d="M.2 1.4C1.6 .3 4 .3 5.6 1.4V3H.2Z" fill="#5a5f62"/><path d="M7.4 5.6V9.4" stroke="#d6a65a" stroke-width="1.9" stroke-linecap="round"/><path d="M7.4 .4V5.4" stroke="#6a6f72" stroke-width="1"/></svg>
<svg style="position:absolute;left:106px;top:314px;" width="9" height="11" viewBox="0 0 9 11"><path d="M.5 .5H6L8.4 2.9V9.9H.5Z" fill="#fbfcfc" stroke="#98a2a8" stroke-width=".8"/><path d="M6 .5V2.9H8.4" fill="none" stroke="#98a2a8" stroke-width=".6"/><path d="M2 4.2H3.2M4 4.2H7M2 6H3.2M4 6H7M2 7.8H3.2M4 7.8H7" stroke="#8d9da8" stroke-width=".8"/></svg>
<svg style="position:absolute;left:130px;top:313px;" width="11" height="12" viewBox="0 0 11 12"><g transform="translate(0 0.8)"><g stroke="#cfd3d5" stroke-width=".8" fill="none"><rect x=".5" y=".5" width="2.4" height="2.4"/><rect x=".5" y="4.4" width="2.4" height="2.4"/><rect x="5" y=".5" width="2.4" height="2.4"/><rect x="5" y="4.4" width="2.4" height="2.4"/><path d="M1.7 7V9.4H4M6.4 7.6L9.6 10.2"/><circle cx="6.8" cy="7.6" r="1.6" stroke="#b9bec1"/></g></g></svg>
<svg style="position:absolute;left:62px;top:315px;" width="11" height="10" viewBox="0 0 11 10"><path d="M.4 4.2L3.6 .6H10.4L7.2 4.2Z" fill="#def2fd" stroke="#9fd3f0" stroke-width=".5"/><path d="M.4 4.2H7.2V8.6H.4Z" fill="#a8dcf8"/><path d="M7.2 4.2L10.4 .6V5L7.2 8.6Z" fill="#6fbce8"/><path d="M1.2 7.4H6.2" stroke="#e8f6fd" stroke-width=".8"/></svg>
<svg style="position:absolute;left:8px;top:117px;" width="9" height="10" viewBox="0 0 9 10"><g transform="translate(0 0.6)"><rect x=".4" y=".4" width="7.8" height="7.6" fill="#fdfdfd" stroke="#b4b9bc" stroke-width=".8"/><path d="M1.8 3H5.4M1.8 4.6H4.6" stroke="#b9bec1" stroke-width=".7"/><path d="M3.6 6.8H7.6" stroke="#3f97cc" stroke-width="1.2"/><path d="M1.4 6.8H3" stroke="#7fbde0" stroke-width=".8"/></g></svg>
<svg style="position:absolute;left:28px;top:135px;" width="9" height="10" viewBox="0 0 9 10"><g transform="translate(0.4 0.8)"><rect width="8.4" height="8.4" fill="#f5f6f7"/><path d="M0 2.3H8.4M0 4.2H8.4M0 6.1H8.4M0 8H8.4M.3 0V8.4M8.1 0V8.4M4.2 1V8.4" stroke="#d9dcde" stroke-width=".7"/><path d="M0 .5H8.4" stroke="#b4b9bc" stroke-width="1"/></g></svg>
<svg style="position:absolute;left:28px;top:145px;" width="9" height="9" viewBox="0 0 9 9"><g transform="translate(0.4 0.6)"><rect width="8.4" height="8.4" fill="#f5f6f7"/><path d="M0 2.3H8.4M0 4.2H8.4M0 6.1H8.4M0 8H8.4M.3 0V8.4M8.1 0V8.4M4.2 1V8.4" stroke="#d9dcde" stroke-width=".7"/><path d="M0 .5H8.4" stroke="#b4b9bc" stroke-width="1"/></g></svg>
<svg style="position:absolute;left:18px;top:155px;" width="10" height="9" viewBox="0 0 10 9"><g transform="translate(0 0.2)"><g fill="#f8f9fb" stroke="#55595c" stroke-width=".8" stroke-linejoin="round"><path d="M.5 4.6H7V7.5H.5Z"/><path d="M.5 4.6L2.6 .5H9L7 4.6Z"/><path d="M7 4.6L9 .5V3.6L7 7.5Z"/></g></g></svg>
<svg style="position:absolute;left:18px;top:164px;" width="10" height="9" viewBox="0 0 10 9"><g transform="translate(0 0.5)"><g fill="#f8f9fb" stroke="#55595c" stroke-width=".8" stroke-linejoin="round"><path d="M.5 4.6H7V7.5H.5Z"/><path d="M.5 4.6L2.6 .5H9L7 4.6Z"/><path d="M7 4.6L9 .5V3.6L7 7.5Z"/></g></g></svg>
<svg style="position:absolute;left:8px;top:327px;" width="9" height="10" viewBox="0 0 9 10"><g transform="translate(0 0.6)"><path d="M.4 1.2H5.6V8.4H.4Z" fill="#f6d57a" stroke="#c9a046" stroke-width=".7"/><path d="M2.6 3.4H6.6V8.4H2.6Z" fill="#5ab4e6"/><path d="M2.6 3.4L4.2 1.8H8.2L6.6 3.4Z" fill="#c4e6f8"/><path d="M6.6 3.4L8.2 1.8V6.8L6.6 8.4Z" fill="#2f86bf"/></g></svg>
<svg style="position:absolute;left:18px;top:338px;" width="9" height="7" viewBox="0 0 9 7"><g transform="translate(0.4 0.7)"><path d="M2.2 .5H7.5L5.8 4.9H.5Z" fill="#fbf4e6" stroke="#a98244" stroke-width=".9" stroke-linejoin="round"/></g></svg>
<svg style="position:absolute;left:18px;top:348px;" width="9" height="6" viewBox="0 0 9 6"><g transform="translate(0.4 0)"><path d="M2.2 .5H7.5L5.8 4.9H.5Z" fill="#fbf4e6" stroke="#a98244" stroke-width=".9" stroke-linejoin="round"/></g></svg>
<svg style="position:absolute;left:18px;top:357px;" width="9" height="6" viewBox="0 0 9 6"><g transform="translate(0.4 0.3)"><path d="M2.2 .5H7.5L5.8 4.9H.5Z" fill="#fbf4e6" stroke="#a98244" stroke-width=".9" stroke-linejoin="round"/></g></svg>
<svg style="position:absolute;left:18px;top:365px;" width="9" height="9" viewBox="0 0 9 9"><g transform="translate(0 0.4)"><path d="M2.4 .4V5.6H8.2M2.4 5.6L.4 8" stroke="#a5793c" stroke-width=".9" fill="none"/></g></svg>
<svg style="position:absolute;left:18px;top:374px;" width="9" height="9" viewBox="0 0 9.47 9.47"><g transform="translate(0.63 0.53)"><path d="M0 2.2L5.6 2.2L5.6 8.2L0 8.2Z" fill="#a2daf7"/><path d="M0 2.2L2.2 0H8L5.6 2.2Z" fill="#e0f2fc"/><path d="M5.6 2.2L8 0V5.8L5.6 8.2Z" fill="#58ade0"/><path d="M.9 3.2H4.6V7.2H.9Z" fill="#c4e8fa" opacity=".8"/><path d="M0 8.2H5.6L8 5.8" stroke="#3f9ad4" stroke-width=".5" fill="none"/></g></svg>
<svg style="position:absolute;left:18px;top:402px;" width="9" height="9" viewBox="0 0 9.47 9.47"><g transform="translate(0.63 0.74)"><path d="M0 2.2L5.6 2.2L5.6 8.2L0 8.2Z" fill="#a2daf7"/><path d="M0 2.2L2.2 0H8L5.6 2.2Z" fill="#e0f2fc"/><path d="M5.6 2.2L8 0V5.8L5.6 8.2Z" fill="#58ade0"/><path d="M.9 3.2H4.6V7.2H.9Z" fill="#c4e8fa" opacity=".8"/><path d="M0 8.2H5.6L8 5.8" stroke="#3f9ad4" stroke-width=".5" fill="none"/></g></svg>
<svg style="position:absolute;left:18px;top:412px;" width="9" height="8" viewBox="0 0 9.47 8.42"><g transform="translate(0.63 0)"><path d="M0 2.2L5.6 2.2L5.6 8.2L0 8.2Z" fill="#a2daf7"/><path d="M0 2.2L2.2 0H8L5.6 2.2Z" fill="#e0f2fc"/><path d="M5.6 2.2L8 0V5.8L5.6 8.2Z" fill="#58ade0"/><path d="M.9 3.2H4.6V7.2H.9Z" fill="#c4e8fa" opacity=".8"/><path d="M0 8.2H5.6L8 5.8" stroke="#3f9ad4" stroke-width=".5" fill="none"/></g></svg>
<svg style="position:absolute;left:18px;top:421px;" width="9" height="9" viewBox="0 0 9.47 9.47"><g transform="translate(0.63 0.32)"><path d="M0 2.2L5.6 2.2L5.6 8.2L0 8.2Z" fill="#a2daf7"/><path d="M0 2.2L2.2 0H8L5.6 2.2Z" fill="#e0f2fc"/><path d="M5.6 2.2L8 0V5.8L5.6 8.2Z" fill="#58ade0"/><path d="M.9 3.2H4.6V7.2H.9Z" fill="#c4e8fa" opacity=".8"/><path d="M0 8.2H5.6L8 5.8" stroke="#3f9ad4" stroke-width=".5" fill="none"/></g></svg>
<svg style="position:absolute;left:18px;top:430px;" width="9" height="9" viewBox="0 0 9.47 9.47"><g transform="translate(0.63 0.74)"><path d="M0 2.2L5.6 2.2L5.6 8.2L0 8.2Z" fill="#a2daf7"/><path d="M0 2.2L2.2 0H8L5.6 2.2Z" fill="#e0f2fc"/><path d="M5.6 2.2L8 0V5.8L5.6 8.2Z" fill="#58ade0"/><path d="M.9 3.2H4.6V7.2H.9Z" fill="#c4e8fa" opacity=".8"/><path d="M0 8.2H5.6L8 5.8" stroke="#3f9ad4" stroke-width=".5" fill="none"/></g></svg>
<svg style="position:absolute;left:18px;top:383px;" width="7" height="8" viewBox="0 0 8.75 10"><g transform="translate(0 0.75)"><path d="M0 2.2L5.6 2.2L5.6 8.2L0 8.2Z" fill="#a2daf7"/><path d="M0 2.2L2.2 0H8L5.6 2.2Z" fill="#e0f2fc"/><path d="M5.6 2.2L8 0V5.8L5.6 8.2Z" fill="#58ade0"/><path d="M.9 3.2H4.6V7.2H.9Z" fill="#c4e8fa" opacity=".8"/><path d="M0 8.2H5.6L8 5.8" stroke="#3f9ad4" stroke-width=".5" fill="none"/></g></svg>
<svg style="position:absolute;left:21px;top:383px;" width="6" height="10" viewBox="0 0 6 10"><g transform="translate(0 0.4)"><circle cx="3" cy="2.4" r="2.2" fill="#e4effa" stroke="#7fa8de" stroke-width=".7"/><path d="M.6 8.6L3 3.4L5.4 8.6Z" fill="#ecc477" stroke="#c79a48" stroke-width=".5"/></g></svg>
<svg style="position:absolute;left:18px;top:393px;" width="7" height="7" viewBox="0 0 8.75 8.75"><g transform="translate(0 0.25)"><path d="M0 2.2L5.6 2.2L5.6 8.2L0 8.2Z" fill="#a2daf7"/><path d="M0 2.2L2.2 0H8L5.6 2.2Z" fill="#e0f2fc"/><path d="M5.6 2.2L8 0V5.8L5.6 8.2Z" fill="#58ade0"/><path d="M.9 3.2H4.6V7.2H.9Z" fill="#c4e8fa" opacity=".8"/><path d="M0 8.2H5.6L8 5.8" stroke="#3f9ad4" stroke-width=".5" fill="none"/></g></svg>
<svg style="position:absolute;left:21px;top:393px;" width="6" height="9" viewBox="0 0 6 9"><circle cx="3" cy="2.4" r="2.2" fill="#e4effa" stroke="#7fa8de" stroke-width=".7"/><path d="M.6 8.6L3 3.4L5.4 8.6Z" fill="#ecc477" stroke="#c79a48" stroke-width=".5"/></svg>
</div>
<div class="graphics">
<!-- drawing canvas -->
<div style="position:absolute;left:227px;top:88px;width:292px;height:412px;background:transparent;border:1px solid #626669;box-shadow:inset 0 0 0 1px rgba(255,255,255,.4);box-sizing:border-box;"></div>
<div style="position:absolute;left:523.3px;top:90.2px;width:97.6px;height:16.5px;background:#f6f8fa;border:1px solid #c6cacd;box-sizing:border-box;"></div>
<svg style="position:absolute;left:338px;top:123px;" width="159" height="56" viewBox="0 0 159 56"><g transform="translate(0.6 0.5)"><path d="M0 0H158M0 11.2H158M0 22.3H158M0 33.1H158M0 44H158M0 54.9H158" stroke="#74777a" stroke-width="1.25" fill="none"/><path d="M0 0V54.9M17.7 0V54.9M35 0V54.9M65.9 0V54.9M96.4 0V54.9M127.2 0V54.9M158 0V54.9" stroke="#3a3c3e" stroke-width="1" fill="none"/></g></svg>
<div class="t" style="left:341px;top:124px;font-size:9.2px;transform:translate(0.2px,0px) scaleX(0.576);color:#36393c;letter-spacing:1.4px;">EL</div>
<div class="t" style="left:358px;top:124px;font-size:9.2px;transform:translate(0.9px,0px) scaleX(0.554);color:#36393c;letter-spacing:1.4px;">POS</div>
<div class="t" style="left:376px;top:124px;font-size:9.2px;transform:translate(0.2px,0px) scaleX(0.489);color:#36393c;">X</div>
<div class="t" style="left:407px;top:124px;font-size:9.2px;transform:translate(0.1px,0px) scaleX(0.489);color:#36393c;">Y</div>
<div class="t" style="left:437px;top:124px;font-size:9.2px;transform:translate(0.6px,0px) scaleX(0.534);color:#36393c;">Z</div>
<div class="t" style="left:468px;top:124px;font-size:9.2px;transform:translate(0.4px,0px) scaleX(0.452);color:#36393c;">C</div>
<div class="t" style="left:341px;top:135px;font-size:9.2px;transform:translate(0px,0.15px) scaleX(0.704);color:#36393c;">1</div>
<div class="t" style="left:358px;top:135px;font-size:9.2px;transform:translate(0.7px,0.15px) scaleX(0.704);color:#36393c;">1</div>
<div class="t" style="left:377px;top:135px;font-size:9.2px;transform:translate(0px,0.15px) scaleX(0.690);color:#36393c;letter-spacing:1.4px;">-23,000</div>
<div class="t" style="left:407px;top:135px;font-size:9.2px;transform:translate(0.1px,0.15px) scaleX(0.681);color:#36393c;letter-spacing:1.4px;">32,000</div>
<div class="t" style="left:438px;top:135px;font-size:9.2px;transform:translate(0.4px,0.15px) scaleX(0.699);color:#36393c;letter-spacing:1.4px;">-3,000</div>
<div class="t" style="left:468px;top:135px;font-size:9.2px;transform:translate(0.4px,0.15px) scaleX(0.689);color:#36393c;letter-spacing:1.4px;">0,000</div>
<div class="t" style="left:341px;top:146px;font-size:9.2px;transform:translate(0.2px,0.1px) scaleX(0.586);color:#36393c;">2</div>
<div class="t" style="left:358px;top:146px;font-size:9.2px;transform:translate(0.7px,0.1px) scaleX(0.704);color:#36393c;">1</div>
<div class="t" style="left:377px;top:146px;font-size:9.2px;transform:translate(0px,0.1px) scaleX(0.690);color:#36393c;letter-spacing:1.4px;">-23,000</div>
<div class="t" style="left:407px;top:146px;font-size:9.2px;transform:translate(0.9px,0.1px) scaleX(0.690);color:#36393c;letter-spacing:1.4px;">-27,000</div>
<div class="t" style="left:438px;top:146px;font-size:9.2px;transform:translate(0.4px,0.1px) scaleX(0.699);color:#36393c;letter-spacing:1.4px;">-2,000</div>
<div class="t" style="left:468px;top:146px;font-size:9.2px;transform:translate(0.4px,0.1px) scaleX(0.689);color:#36393c;letter-spacing:1.4px;">0,000</div>
<div class="t" style="left:341px;top:156px;font-size:9.2px;transform:translate(0px,0.95px) scaleX(0.704);color:#36393c;">1</div>
<div class="t" style="left:358px;top:156px;font-size:9.2px;transform:translate(0.9px,0.95px) scaleX(0.586);color:#36393c;">2</div>
<div class="t" style="left:376px;top:156px;font-size:9.2px;transform:translate(0.2px,0.95px) scaleX(0.681);color:#36393c;letter-spacing:1.4px;">23,000</div>
<div class="t" style="left:407px;top:156px;font-size:9.2px;transform:translate(0.1px,0.95px) scaleX(0.681);color:#36393c;letter-spacing:1.4px;">32,000</div>
<div class="t" style="left:438px;top:156px;font-size:9.2px;transform:translate(0.4px,0.95px) scaleX(0.699);color:#36393c;letter-spacing:1.4px;">-3,000</div>
<div class="t" style="left:468px;top:156px;font-size:9.2px;transform:translate(0.4px,0.95px) scaleX(0.689);color:#36393c;letter-spacing:1.4px;">0,000</div>
<div class="t" style="left:341px;top:167px;font-size:9.2px;transform:translate(0.2px,0.85px) scaleX(0.586);color:#36393c;">2</div>
<div class="t" style="left:358px;top:167px;font-size:9.2px;transform:translate(0.9px,0.85px) scaleX(0.586);color:#36393c;">2</div>
<div class="t" style="left:376px;top:167px;font-size:9.2px;transform:translate(0.2px,0.85px) scaleX(0.681);color:#36393c;letter-spacing:1.4px;">23,000</div>
<div class="t" style="left:407px;top:167px;font-size:9.2px;transform:translate(0.9px,0.85px) scaleX(0.690);color:#36393c;letter-spacing:1.4px;">-27,000</div>
<div class="t" style="left:438px;top:167px;font-size:9.2px;transform:translate(0.4px,0.85px) scaleX(0.699);color:#36393c;letter-spacing:1.4px;">-2,000</div>
<div class="t" style="left:468px;top:167px;font-size:9.2px;transform:translate(0.4px,0.85px) scaleX(0.689);color:#36393c;letter-spacing:1.4px;">0,000</div>
<svg style="position:absolute;left:336px;top:195px;" width="160" height="34" viewBox="0 0 160 34"><g transform="translate(0.7 0.4)"><path d="M0 0H158.6M0 11.1H158.6M0 22H158.6M0 32.9H158.6" stroke="#74777a" stroke-width="1.25" fill="none"/><path d="M0 0V32.9M17.6 0V32.9M35.5 0V32.9M66.6 0V32.9M97.1 0V32.9M127.8 0V32.9M158.6 0V32.9" stroke="#3a3c3e" stroke-width="1" fill="none"/></g></svg>
<div class="t" style="left:339px;top:195px;font-size:9.2px;transform:translate(0.3px,0.85px) scaleX(0.576);color:#36393c;letter-spacing:1.4px;">EL</div>
<div class="t" style="left:356px;top:195px;font-size:9.2px;transform:translate(0.9px,0.85px) scaleX(0.554);color:#36393c;letter-spacing:1.4px;">POS</div>
<div class="t" style="left:374px;top:195px;font-size:9.2px;transform:translate(0.8px,0.85px) scaleX(0.489);color:#36393c;">X</div>
<div class="t" style="left:405px;top:195px;font-size:9.2px;transform:translate(0.9px,0.85px) scaleX(0.489);color:#36393c;">Y</div>
<div class="t" style="left:436px;top:195px;font-size:9.2px;transform:translate(0.4px,0.85px) scaleX(0.534);color:#36393c;">Z</div>
<div class="t" style="left:467px;top:195px;font-size:9.2px;transform:translate(0.1px,0.85px) scaleX(0.452);color:#36393c;">C</div>
<div class="t" style="left:339px;top:206px;font-size:9.2px;transform:translate(0.1px,0.85px) scaleX(0.704);color:#36393c;">1</div>
<div class="t" style="left:356px;top:206px;font-size:9.2px;transform:translate(0.7px,0.85px) scaleX(0.704);color:#36393c;">1</div>
<div class="t" style="left:375px;top:206px;font-size:9.2px;transform:translate(0.6px,0.85px) scaleX(0.690);color:#36393c;letter-spacing:1.4px;">-23,000</div>
<div class="t" style="left:405px;top:206px;font-size:9.2px;transform:translate(0.9px,0.85px) scaleX(0.681);color:#36393c;letter-spacing:1.4px;">32,000</div>
<div class="t" style="left:437px;top:206px;font-size:9.2px;transform:translate(0.2px,0.85px) scaleX(0.699);color:#36393c;letter-spacing:1.4px;">-3,000</div>
<div class="t" style="left:467px;top:206px;font-size:9.2px;transform:translate(0.1px,0.85px) scaleX(0.689);color:#36393c;letter-spacing:1.4px;">0,000</div>
<div class="t" style="left:339px;top:217px;font-size:9.2px;transform:translate(0.1px,0.75px) scaleX(0.704);color:#36393c;">1</div>
<div class="t" style="left:356px;top:217px;font-size:9.2px;transform:translate(0.9px,0.75px) scaleX(0.586);color:#36393c;">2</div>
<div class="t" style="left:374px;top:217px;font-size:9.2px;transform:translate(0.8px,0.75px) scaleX(0.681);color:#36393c;letter-spacing:1.4px;">23,000</div>
<div class="t" style="left:405px;top:217px;font-size:9.2px;transform:translate(0.9px,0.75px) scaleX(0.681);color:#36393c;letter-spacing:1.4px;">32,000</div>
<div class="t" style="left:437px;top:217px;font-size:9.2px;transform:translate(0.2px,0.75px) scaleX(0.699);color:#36393c;letter-spacing:1.4px;">-3,000</div>
<div class="t" style="left:467px;top:217px;font-size:9.2px;transform:translate(0.1px,0.75px) scaleX(0.689);color:#36393c;letter-spacing:1.4px;">0,000</div>
<div class="t" style="left:264px;top:491px;font-size:6.6px;transform:translate(0px,0px) scaleX(0.948);color:#92979c;-webkit-text-stroke:0;">REP : 6735-015_EL_01</div>
<div class="t" style="left:155px;top:498px;font-size:6.6px;transform:translate(0px,0.4px) scaleX(0.964);color:#92979c;-webkit-text-stroke:0;">SCALE : 1:2</div>
<div class="t" style="left:206px;top:498px;font-size:6.6px;transform:translate(0px,0.4px) scaleX(0.945);color:#92979c;-webkit-text-stroke:0;">TYPE : ASSEM</div>
<div class="t" style="left:258px;top:498px;font-size:6.6px;transform:translate(0px,0.4px) scaleX(0.950);color:#92979c;-webkit-text-stroke:0;">NAME : 6735-015_MAP_ASM</div>
<div class="t" style="left:351px;top:498px;font-size:6.6px;transform:translate(0px,0.4px) scaleX(1.004);color:#92979c;-webkit-text-stroke:0;">SIZE : A4</div>
<div class="t" style="left:386px;top:498px;font-size:6.6px;transform:translate(0px,0.4px) scaleX(0.984);color:#92979c;-webkit-text-stroke:0;">SHEET 3  OF 5</div>
<div class="t" style="left:846px;top:471px;font-size:6.7px;transform:translate(0.8px,0.4px) scaleX(0.963);color:#a3a7ac;-webkit-text-stroke:0;">X.X</div>
<div class="t" style="left:862px;top:471px;font-size:6.7px;transform:translate(0.8px,0.4px) scaleX(0.899);color:#a3a7ac;-webkit-text-stroke:0;">+-0.1</div>
<div class="t" style="left:844px;top:478px;font-size:6.7px;transform:translate(0.2px,0.5px) scaleX(0.982);color:#a3a7ac;-webkit-text-stroke:0;">X.XX</div>
<div class="t" style="left:862px;top:478px;font-size:6.7px;transform:translate(0.8px,0.5px) scaleX(0.870);color:#a3a7ac;-webkit-text-stroke:0;">+-0.01</div>
<div class="t" style="left:841px;top:485px;font-size:6.7px;transform:translate(0.8px,0.1px) scaleX(0.942);color:#a3a7ac;-webkit-text-stroke:0;">X.XXX</div>
<div class="t" style="left:862px;top:485px;font-size:6.7px;transform:translate(0.8px,0.1px) scaleX(0.904);color:#a3a7ac;-webkit-text-stroke:0;">+-0.001</div>
<div class="t" style="left:843px;top:491px;font-size:6.7px;transform:translate(0.2px,0.8px) scaleX(0.928);color:#a3a7ac;-webkit-text-stroke:0;">ANG.</div>
<div class="t" style="left:862px;top:491px;font-size:6.7px;transform:translate(0.8px,0.8px) scaleX(0.938);color:#a3a7ac;-webkit-text-stroke:0;">+-0.5</div>
<svg style="position:absolute;left:400px;top:270px;will-change:transform;" width="140" height="110" viewBox="0 0 714.98 561.77"><g fill="none" stroke="#1e1f21" stroke-width="6.2" stroke-linejoin="round"><rect x="185" y="262" width="307" height="196" rx="4" stroke="#f7f8f9" stroke-width="5"/><path d="M185 340H492" stroke="#f4f5f6" stroke-width="4"/><rect x="177" y="254" width="323" height="212" rx="8"/><path d="M180 455H322M358 455H497" stroke-width="4" stroke="#2a2c2e"/><path d="M177 331H500" stroke-width="5" stroke="#2e3032"/><path d="M215 256A42 42 0 0 0 299 256M229 256A28 28 0 0 0 285 256M377 256A42 42 0 0 0 461 256M391 256A28 28 0 0 0 447 256" stroke-width="4.5" stroke="#2e3032"/><path d="M222 258A35 35 0 0 0 292 258M384 258A35 35 0 0 0 454 258" stroke-width="3" stroke="#f4f5f6"/><rect x="232" y="108" width="53" height="140" rx="3" fill="#e5e7eb"/><rect x="392" y="108" width="55" height="140" rx="3" fill="#e5e7eb"/><path d="M232 243H285M392 243H447" stroke-width="4"/><path d="M238 266H279M398 266H441" stroke-width="4" stroke="#f7f8f9"/><ellipse cx="240" cy="314" rx="17" ry="13" stroke-width="5" stroke="#2a2c2e" fill="#f0f1f3"/><ellipse cx="437" cy="314" rx="17" ry="13" stroke-width="5" stroke="#2a2c2e" fill="#f0f1f3"/><circle cx="257" cy="346" r="8" stroke-width="4.5" stroke="#2a2c2e"/><circle cx="419" cy="346" r="8" stroke-width="4.5" stroke="#2a2c2e"/><rect x="288" y="340" width="104" height="68" rx="16" stroke-width="8"/><path d="M325 410V440L318 466M355 410V440L362 466M325 440H355" stroke-width="5" stroke="#26282a"/><rect x="249" y="268" width="16" height="16" stroke-width="3" stroke="#5a5d60"/><rect x="411" y="268" width="16" height="16" stroke-width="3" stroke="#5a5d60"/></g><circle cx="257" cy="281" r="4.5" fill="#d040d0"/><circle cx="419" cy="281" r="4.5" fill="#d040d0"/><path d="M339 254V226" stroke="#2222f0" stroke-width="4.5"/><path d="M331 232L339 214L347 232Z" fill="#2222f0"/><path d="M364 248L374 254" stroke="#d82020" stroke-width="5"/><text x="257" y="159" font-size="31" font-weight="700" font-family="Liberation Sans,Arial,sans-serif" fill="#1c1c1c" text-anchor="middle">1</text><text x="419" y="159" font-size="31" font-weight="700" font-family="Liberation Sans,Arial,sans-serif" fill="#1c1c1c" text-anchor="middle">1</text></svg>
<svg style="position:absolute;left:400px;top:395px;" width="140" height="110" viewBox="0 0 714.98 561.77"><g fill="none" stroke="#1e1f21" stroke-width="5" stroke-linejoin="round"><rect x="174" y="104" width="306" height="333" rx="3" stroke="#f4f5f6" stroke-width="4"/><rect x="166" y="96" width="322" height="349" rx="6" stroke-width="7"/><path d="M203 98V150H218M287 98V150H272M365 98V150H380M452 98V150H437" stroke-width="5" stroke="#2a2c2e"/><rect x="213" y="130" width="65" height="260" stroke="#3e4042" stroke-width="4.5"/><rect x="375" y="130" width="65" height="260" stroke="#3e4042" stroke-width="4.5"/><path d="M213 185H278M375 185H440M213 298H278M375 298H440" stroke="#3e4042" stroke-width="4"/><rect x="221" y="134" width="48" height="48" rx="4" stroke="#55585b" stroke-width="3.5"/><rect x="383" y="134" width="48" height="48" rx="4" stroke="#55585b" stroke-width="3.5"/><circle cx="243" cy="270" r="15" stroke="#4a4d50" stroke-width="3.5"/><circle cx="405" cy="270" r="15" stroke="#4a4d50" stroke-width="3.5"/><rect x="176" y="180" width="22" height="180" rx="11" stroke="#5f6265" stroke-width="3.5" fill="#eceef1"/><rect x="454" y="180" width="22" height="180" rx="11" stroke="#5f6265" stroke-width="3.5" fill="#eceef1"/><rect x="237" y="358" width="16" height="16" rx="3" stroke-width="6"/><rect x="399" y="358" width="16" height="16" rx="3" stroke-width="6"/><path d="M213 388H278M375 388H440" stroke-width="6" stroke="#2a2c2e"/><rect x="192" y="398" width="100" height="45" rx="3" stroke-width="5.5" fill="#e5e7eb"/><rect x="358" y="398" width="100" height="45" rx="3" stroke-width="5.5" fill="#e5e7eb"/><path d="M194 440H290M360 440H456" stroke-width="6"/><circle cx="325" cy="122" r="11" stroke-width="4.5" stroke="#2e3032"/><circle cx="325" cy="157" r="15" stroke-width="4.5" stroke="#2e3032"/><circle cx="325" cy="382" r="15" stroke-width="4.5" stroke="#2e3032"/><circle cx="325" cy="418" r="11" stroke-width="4.5" stroke="#2e3032"/><rect x="307" y="226" width="38" height="92" rx="8" stroke-width="7"/><circle cx="325" cy="303" r="8" stroke-width="4.5"/><circle cx="325" cy="242" r="7" stroke-width="3"/></g><circle cx="325" cy="242" r="5" fill="#3bd04a"/><path d="M325 248V272" stroke="#4be05a" stroke-width="4.5"/><path d="M328 271H352" stroke="#e82828" stroke-width="4.5"/><path d="M348 264L362 271L348 278Z" fill="#e82828"/><path d="M240 140h12v10h8v14h-8v-8h-12Z" fill="#f0a020"/><path d="M402 140h12v10h8v14h-8v-8h-12Z" fill="#f0a020"/><circle cx="241" cy="156" r="4" fill="#e060c0"/><circle cx="405" cy="152" r="4" fill="#e060c0"/></svg>
<svg style="position:absolute;left:526px;top:94px;" width="10" height="10" viewBox="0 0 10 10"><g transform="translate(0.7 0.1)"><rect x=".5" y=".5" width="6.4" height="6.4" fill="#eef4f8" stroke="#a9b4bb" stroke-width=".7" stroke-dasharray="1.2 .8"/><circle cx="4" cy="3.8" r="2.5" fill="#f7fbfd" stroke="#7fb0cf" stroke-width=".9"/><path d="M5.8 5.8L8.4 8.4" stroke="#9aa1a5" stroke-width="1.2"/></g></svg>
<svg style="position:absolute;left:540px;top:94px;" width="10" height="10" viewBox="0 0 10 10"><g transform="translate(0.1 0.1)"><circle cx="3.6" cy="3.6" r="2.9" fill="#f7fbfd" stroke="#2f7fb5" stroke-width="1"/><path d="M2 3.6H5.2M3.6 2V5.2" stroke="#1f5f8f" stroke-width="1"/><path d="M5.8 5.8L8.6 8.6" stroke="#9aa1a5" stroke-width="1.3"/></g></svg>
<svg style="position:absolute;left:553px;top:94px;" width="10" height="10" viewBox="0 0 10 10"><g transform="translate(0.5 0.1)"><circle cx="3.6" cy="3.6" r="2.9" fill="#f7fbfd" stroke="#2f7fb5" stroke-width="1"/><path d="M2 3.6H5.2" stroke="#1f5f8f" stroke-width="1"/><path d="M5.8 5.8L8.6 8.6" stroke="#9aa1a5" stroke-width="1.3"/></g></svg>
<svg style="position:absolute;left:567px;top:94px;" width="10" height="10" viewBox="0 0 10 10"><g transform="translate(0.2 0.1)"><rect x=".5" y=".8" width="8" height="7.6" fill="#f4f8fb" stroke="#8e9599" stroke-width=".8"/><path d="M8.2 1.2V8H1.4Z" fill="#2f86bf"/><path d="M8.2 1.2L1.4 8" stroke="#1c3f58" stroke-width=".9"/></g></svg>
<svg style="position:absolute;left:580px;top:93px;" width="11" height="11" viewBox="0 0 11 11"><g transform="translate(0.3 0.6)"><path d="M.6 2.8H6.2V8.4H.6Z" fill="#f7fbfd" stroke="#2f7fb5" stroke-width="1"/><path d="M.6 2.8L2.8 .6H8.4L6.2 2.8M8.4 .6V6.2L6.2 8.4" fill="none" stroke="#2f7fb5" stroke-width="1"/><path d="M8 9.6H9.8V7.8Z" fill="#4a5053"/></g></svg>
<svg style="position:absolute;left:594px;top:93px;" width="10" height="11" viewBox="0 0 10 11"><g transform="translate(0 0.6)"><path d="M.6 3.2C.6 1.2 3 .4 5 .8C7 1.2 8.2 2.6 8 4.6V6.6C6 8.6 2.6 8.4 .6 6.8Z" fill="#d9dcde" stroke="#c3c7ca" stroke-width=".7"/><path d="M.8 5.4C3 6.8 6 6.6 8 5" stroke="#eceeef" stroke-width=".8" fill="none"/><path d="M8 9.6H9.8V7.8Z" fill="#8d9498"/></g></svg>
<svg style="position:absolute;left:607px;top:93px;" width="11" height="11" viewBox="0 0 11 11"><g transform="translate(0.5 0.6)"><g stroke="#a87b2e" stroke-width=".9"><path d="M1 1L3 3M3 1L1 3M4.6 3.4L6.6 5.4M6.6 3.4L4.6 5.4M1.4 6.6L3.2 8.4M3.2 6.6L1.4 8.4"/></g><path d="M5 1.6H7.6M4 6V8.6" stroke="#c9a046" stroke-width=".8"/><circle cx="7.4" cy="7" r=".8" fill="#a87b2e"/><path d="M8.2 9.6H10V7.8Z" fill="#4a5053"/></g></svg>
</div>
<div class="statusbar">
<!-- sheet tabs / status bar / taskbar -->
<div style="position:absolute;left:147px;top:510px;width:207px;height:12px;background:#e3e4e5;border:1px solid #a9acae;box-sizing:border-box;"></div>
<div style="position:absolute;left:186px;top:510px;width:11px;height:10px;background:#ebecec;border:1px solid #9b9ea0;box-sizing:border-box;"></div>
<div style="position:absolute;left:254px;top:510px;width:29px;height:12px;background:#fbfcfd;border:1px solid #a9acae;border-top-color:#d5d7d8;box-sizing:border-box;"></div>
<div style="position:absolute;left:223px;top:511px;width:1px;height:10px;background:#bcbfc1;"></div>
<div style="position:absolute;left:314px;top:511px;width:1px;height:10px;background:#bcbfc1;"></div>
<div class="t" style="left:201px;top:510px;font-size:7.2px;transform:translate(0.7px,0.3px) scaleX(0.823);color:#4a4f52;">Blatt 1</div>
<div class="t" style="left:229px;top:510px;font-size:7.2px;transform:translate(0px,0.3px) scaleX(0.790);color:#4a4f52;">Sheet 1</div>
<div class="t" style="left:257px;top:510px;font-size:7.2px;transform:translate(0.8px,0.3px) scaleX(0.855);color:#2c3032;font-weight:700;">Sheet 2</div>
<div class="t" style="left:289px;top:510px;font-size:7.2px;transform:translate(0px,0.3px) scaleX(0.806);color:#4a4f52;">Sheet 3</div>
<div class="t" style="left:324px;top:510px;font-size:7.2px;transform:translate(0px,0.3px) scaleX(0.826);color:#4a4f52;">Sheet 4</div>
<div class="t" style="left:189px;top:510px;font-size:7.4px;transform:translate(0.2px,0px) scaleX(0.926);color:#33393c;font-weight:700;">+</div>
<svg style="position:absolute;left:150px;top:513px;" width="5" height="5" viewBox="0 0 5 5"><g transform="translate(0 0.6)"><path d="M2.4 0V4L0 2ZM5 0V4L2.6 2Z" fill="#4a4f52"/></g></svg>
<svg style="position:absolute;left:160px;top:513px;" width="3" height="5" viewBox="0 0 3 5"><g transform="translate(0 0.6)"><path d="M3 0V4L0 2Z" fill="#b4b8ba"/></g></svg>
<svg style="position:absolute;left:168px;top:513px;" width="3" height="5" viewBox="0 0 3 5"><g transform="translate(0 0.6)"><path d="M0 0V4L3 2Z" fill="#b4b8ba"/></g></svg>
<svg style="position:absolute;left:176px;top:513px;" width="5" height="5" viewBox="0 0 5 5"><g transform="translate(0 0.6)"><path d="M0 0V4L2.4 2ZM2.6 0V4L5 2Z" fill="#4a4f52"/></g></svg>
<div style="position:absolute;left:5px;top:525px;width:12px;height:13px;background:#e4e7e7;border:1px solid #cdd1d2;box-sizing:border-box;"></div>
<svg style="position:absolute;left:7px;top:527px;" width="9" height="9" viewBox="0 0 9 9"><g transform="translate(0 0.2)"><rect x=".4" y=".4" width="7.4" height="7.4" fill="#fcfdfd" stroke="#9aa1a5" stroke-width=".7"/><path d="M.4 1.8H7.8" stroke="#b18b86" stroke-width=".7"/><rect x=".8" y="2.4" width="1.8" height="5" fill="#2f86bf"/><ellipse cx="5.8" cy="6" rx="2.4" ry="1.5" fill="#f4f5f5" stroke="#33393c" stroke-width=".8"/><circle cx="5.8" cy="6" r=".8" fill="#33393c"/></g></svg>
<svg style="position:absolute;left:20px;top:527px;" width="10" height="10" viewBox="0 0 10 10"><circle cx="4.6" cy="5" r="3.4" fill="#3f97d6"/><path d="M2.4 4.6C3.4 3 5.8 3 6.8 4.6M2 5.6H7" stroke="#dff0fa" stroke-width=".8" fill="none"/><path d="M.6 8.2C1.4 4.8 5 1.2 8.8 1" stroke="#2b6ea8" stroke-width="1" fill="none"/></svg>
<svg style="position:absolute;left:33px;top:527px;" width="10" height="10" viewBox="0 0 10 10"><g transform="translate(0.4 0.4)"><rect x=".5" y=".5" width="8" height="7.8" rx=".6" fill="#f1f5f8" stroke="#3f8fbe" stroke-width="1"/><rect x="1.6" y="1.6" width="5.8" height="5.6" fill="#e3e9ee"/></g></svg>
<div style="position:absolute;left:48px;top:525px;width:1px;height:13px;background:#cfd3d5;"></div>
<div style="position:absolute;left:812px;top:525px;width:1px;height:13px;background:#d3d6d8;"></div>
<div style="position:absolute;left:830px;top:525px;width:1px;height:13px;background:#d3d6d8;"></div>
<div style="position:absolute;left:854px;top:525px;width:1px;height:13px;background:#d3d6d8;"></div>
<svg style="position:absolute;left:814px;top:529px;" width="14" height="5" viewBox="0 0 14 5"><g transform="translate(0.6 0)"><circle cx="1.4" cy="2.4" r="1.3" fill="#c9cdcf"/><circle cx="6.4" cy="2.4" r="2.5" fill="#f7ee12"/><circle cx="11.6" cy="2.4" r="1.3" fill="#c9cdcf"/></g></svg>
<div style="position:absolute;left:831px;top:525px;width:23px;height:13px;background:#fbfcfd;"></div>
<div style="position:absolute;left:845px;top:526px;width:1px;height:11px;background:#e1e4e6;"></div>
<svg style="position:absolute;left:834px;top:527px;" width="10" height="9" viewBox="0 0 10 9"><g transform="translate(0.6 0)"><rect x=".4" y="2.6" width="3.4" height="5.4" rx="1" fill="#4a4540"/><rect x="5.2" y="2.6" width="3.4" height="5.4" rx="1" fill="#4a4540"/><rect x="1.2" y=".4" width="2.2" height="3" fill="#6a625a"/><rect x="5.6" y=".4" width="2.2" height="3" fill="#6a625a"/><rect x="3.6" y="3" width="2" height="2.4" fill="#8a8178"/></g></svg>
<svg style="position:absolute;left:847px;top:530px;" width="5" height="3" viewBox="0 0 5 3"><g transform="translate(0.6 0.4)"><path d="M0 0H3.6L1.8 2.2Z" fill="#3c4245"/></g></svg>
<div style="position:absolute;left:902px;top:525px;width:86px;height:13px;background:#fdfdfe;border:1px solid #c3c7c9;box-sizing:border-box;"></div>
<div style="position:absolute;left:979px;top:526px;width:1px;height:11px;background:#cdd1d3;"></div>
<div class="t" style="left:905px;top:526px;font-size:7.4px;transform:translate(0.8px,0.5px) scaleX(0.828);">General</div>
<svg style="position:absolute;left:981px;top:530px;" width="5" height="3" viewBox="0 0 5 3"><g transform="translate(0.8 0.4)"><path d="M0 0H3.6L1.8 2.2Z" fill="#3c4245"/></g></svg>
<svg style="position:absolute;left:990px;top:533px;" width="6" height="6" viewBox="0 0 6 6"><path d="M5.6 .4L.4 5.6M5.6 2.6L2.6 5.6M5.6 4.6L4.6 5.6" stroke="#c3c7c9" stroke-width=".7"/></svg>
<div style="position:absolute;left:25px;top:542px;width:179px;height:20px;background:#f3f5f8;"></div>
<div style="position:absolute;left:25px;top:541px;width:179px;height:1px;background:#8d9499;"></div>
<svg style="position:absolute;left:8px;top:547px;" width="9" height="10" viewBox="0 0 9 10"><g transform="translate(0.1 0)"><path d="M0 1.3L3.6 .8V4.3H0ZM4.2 .7L8.8 0V4.3H4.2ZM0 4.9H3.6V8.4L0 7.9ZM4.2 4.9H8.8V9.2L4.2 8.5Z" fill="#f4f6f7"/></g></svg>
<svg style="position:absolute;left:31px;top:546px;" width="10" height="11" viewBox="0 0 10 11"><g transform="translate(0 0.6)"><circle cx="5.8" cy="3.8" r="3" fill="none" stroke="#3a3d40" stroke-width="1"/><path d="M3.6 6L.6 9" stroke="#3a3d40" stroke-width="1.1"/></g></svg>
<div class="t" style="left:45px;top:546px;font-size:8.6px;transform:translate(0.5px,0.6px) scaleX(0.887);color:#3a3d40;">Skriv her for at søge</div>
<svg style="position:absolute;left:169px;top:544px;" width="26" height="16" viewBox="0 0 26 16"><circle cx="1.4" cy="10.8" r=".9" fill="#3cc8f0"/><circle cx="5" cy="6.4" r=".9" fill="#f2a33a"/><path d="M25 4.6L26 6.2L24.6 7.6L23.2 6.2Z" fill="#d24fe0"/><circle cx="15.4" cy="3.8" r="3.5" fill="#f7a92c"/><path d="M7.6 15.2C8 10.4 11 7.2 15.4 7.2C19 7.2 21.4 9.6 21.8 13L19 15.2Z" fill="#f39a1e"/><circle cx="18.6" cy="10.6" r="2.9" fill="#c4ecfc" stroke="#2f86d8" stroke-width="1.1"/><path d="M20.8 12.8L24 15.6" stroke="#2a3fc0" stroke-width="1.7"/></svg>
<svg style="position:absolute;left:212px;top:547px;" width="9" height="9" viewBox="0 0 9 9"><g transform="translate(0.4 0.8)"><circle cx="4" cy="4" r="3.3" fill="none" stroke="#f7f9fa" stroke-width="1.1"/></g></svg>
<svg style="position:absolute;left:236px;top:547px;" width="11" height="9" viewBox="0 0 11 9"><g transform="translate(0.8 0.6)"><rect x="1.6" y="1.4" width="4.8" height="5.4" fill="none" stroke="#f1f3f5" stroke-width=".9"/><path d="M.3 .6V7.6M7.8 .6V3.2M7.8 5V7.6" stroke="#f1f3f5" stroke-width=".8"/><path d="M8.6 3.6H9.4V4.6H8.6Z" fill="#f1f3f5"/></g></svg>
<svg style="position:absolute;left:261px;top:546px;" width="15" height="14" viewBox="0 0 15 14"><g transform="translate(0.5 0.4)"><rect x="4.4" y="0" width="8.6" height="8" fill="#1a73c8"/><rect x="8.6" y="0" width="4.4" height="4" fill="#35a3ea"/><rect x="0" y="2.2" width="7" height="7" rx=".8" fill="#0f5fb4"/><circle cx="3.5" cy="5.7" r="1.8" fill="none" stroke="#fff" stroke-width="1"/><rect x="5.6" y="7" width="8.2" height="5.8" fill="#f2c088"/><path d="M5.6 7L9.7 10.2L13.8 7" stroke="#fdf3e4" stroke-width=".9" fill="none"/></g></svg>
<svg style="position:absolute;left:287px;top:546px;" width="12" height="11" viewBox="0 0 12 11"><g transform="translate(0.4 0.8)"><path d="M0 .8H4.2L5.2 2H11.6V9.6H0Z" fill="#f5c443"/><path d="M0 3H11.6V9.6H0Z" fill="#fcd865"/><rect x="2.6" y="5.6" width="6.4" height="4" fill="#3d8fd8"/><rect x="4.2" y="7.6" width="3.2" height="2" fill="#fcd865"/></g></svg>
<svg style="position:absolute;left:312px;top:545px;" width="14" height="14" viewBox="0 0 14 14"><g transform="translate(0.3 0.3)"><rect x="0" y="0" width="13" height="13.2" fill="#d8dadb"/><rect x="0" y="0" width="13" height="3.2" fill="#2f9a34"/><rect x="1.2" y="4.6" width="10.6" height="7.4" fill="#f1f2f3"/><path d="M2 6.4H6M2 8.4H5" stroke="#c86a6a" stroke-width=".8"/><rect x="6.6" y="7" width="4.8" height="4.4" fill="#8d9498"/></g></svg>
<svg style="position:absolute;left:338px;top:545px;" width="14" height="14" viewBox="0 0 14 14"><g transform="translate(0.2 0.6)"><circle cx="6.5" cy="6.5" r="6.4" fill="#e8453c"/><path d="M6.5 6.5L.96 3.3A6.4 6.4 0 0 0 6.5 12.9Z" fill="#2da94f"/><path d="M6.5 6.5L6.5 12.9A6.4 6.4 0 0 0 12.04 3.3Z" fill="#fbbc09"/><path d="M.96 3.3A6.4 6.4 0 0 1 12.04 3.3L6.5 3.3Z" fill="#e8453c"/><circle cx="6.5" cy="6.5" r="3" fill="#f4f6f8"/><circle cx="6.5" cy="6.5" r="2.3" fill="#4688f1"/></g></svg>
<svg style="position:absolute;left:365px;top:545px;" width="11" height="14" viewBox="0 0 11 14"><g transform="translate(0.6 0.4)"><rect width="9.6" height="12.8" rx=".8" fill="#5a6872"/><rect x="1.2" y="1.2" width="7.2" height="2.8" fill="#58c3f2"/><path d="M1.2 5.6H3.2V7.2H1.2ZM3.8 5.6H5.8V7.2H3.8ZM6.4 5.6H8.4V7.2H6.4ZM1.2 8H3.2V9.6H1.2ZM3.8 8H5.8V9.6H3.8ZM6.4 8H8.4V9.6H6.4ZM1.2 10.4H3.2V12H1.2ZM3.8 10.4H5.8V12H3.8ZM6.4 10.4H8.4V12H6.4Z" fill="#e6eaec"/></g></svg>
<svg style="position:absolute;left:389px;top:546px;" width="14" height="12" viewBox="0 0 14 12"><g transform="translate(0.2 0)"><path d="M1.4 0H11.6L13 2.4H0Z" fill="#b9bec2"/><rect x="0" y="2.6" width="13" height="2.4" fill="#8d9499"/><rect x="0" y="5.6" width="13" height="2.4" fill="#9aa1a6"/><rect x="0" y="8.6" width="13" height="2.6" fill="#8d9499"/><path d="M0 5.3H13M0 8.3H13" stroke="#3a4048" stroke-width=".6"/><circle cx="11.4" cy="1.6" r="1.4" fill="#e0483e"/></g></svg>
<svg style="position:absolute;left:408px;top:541px;" width="24" height="21" viewBox="0 0 24 21"><g transform="translate(0.3 0)"><rect width="23.2" height="21" fill="#4a5861"/></g></svg>
<svg style="position:absolute;left:414px;top:546px;" width="14" height="12" viewBox="0 0 14 12"><g transform="translate(0.8 0)"><rect width="12.2" height="12" fill="#f5f7f8"/><rect x="2.6" y="1.2" width="8.4" height="7.6" fill="#2f97d8"/><rect x="1.2" y="1.2" width="1.6" height="9.6" fill="#fff"/></g></svg>
<svg style="position:absolute;left:440px;top:545px;" width="12" height="14" viewBox="0 0 12 14"><g transform="translate(0.4 0.6)"><path d="M3.4 .6L10.8 1.8L8.4 12L.6 10.4Z" fill="#a9dcf0" stroke="#dff3fb" stroke-width=".8"/><path d="M3.4 .6L10.8 1.8L10.2 4L2.8 2.8Z" fill="#e6f6fc"/><path d="M.6 10.4L8.4 12" stroke="#6aa9c6" stroke-width=".9"/></g></svg>
<svg style="position:absolute;left:257px;top:560px;" width="21" height="2" viewBox="0 0 21 2"><g transform="translate(0.7 0.5)"><rect width="20.3" height="1.5" fill="#79b8ea"/></g></svg>
<svg style="position:absolute;left:283px;top:560px;" width="21" height="2" viewBox="0 0 21 2"><g transform="translate(0 0.5)"><rect width="20.5" height="1.5" fill="#79b8ea"/></g></svg>
<svg style="position:absolute;left:308px;top:560px;" width="21" height="2" viewBox="0 0 21 2"><g transform="translate(0.4 0.5)"><rect width="20.6" height="1.5" fill="#79b8ea"/></g></svg>
<svg style="position:absolute;left:334px;top:560px;" width="21" height="2" viewBox="0 0 21 2"><g transform="translate(0 0.5)"><rect width="20.7" height="1.5" fill="#79b8ea"/></g></svg>
<svg style="position:absolute;left:359px;top:560px;" width="21" height="2" viewBox="0 0 21 2"><g transform="translate(0.5 0.5)"><rect width="20.5" height="1.5" fill="#79b8ea"/></g></svg>
<svg style="position:absolute;left:385px;top:560px;" width="21" height="2" viewBox="0 0 21 2"><g transform="translate(0 0.5)"><rect width="20.5" height="1.5" fill="#79b8ea"/></g></svg>
<svg style="position:absolute;left:408px;top:560px;" width="24" height="2" viewBox="0 0 24 2"><g transform="translate(0.6 0.5)"><rect width="23.1" height="1.5" fill="#79b8ea"/></g></svg>
<svg style="position:absolute;left:436px;top:560px;" width="21" height="2" viewBox="0 0 21 2"><g transform="translate(0.8 0.5)"><rect width="20.2" height="1.5" fill="#79b8ea"/></g></svg>
<svg style="position:absolute;left:806px;top:545px;" width="15" height="13" viewBox="0 0 15 13"><g transform="translate(0.6 0)"><path d="M.4 6.6C1 2.6 4 .8 6.4 .8C9 .8 11.8 2.8 12.2 6.6C11 5.6 9.6 5.6 8.4 6.6C7.4 5.6 5.6 5.6 4.4 6.6C3.2 5.6 1.6 5.6 .4 6.6Z" fill="#3c9be8"/><path d="M6.4 6V11C6.4 12.4 4.6 12.4 4.6 11.2" stroke="#d7dde2" stroke-width=".9" fill="none"/><path d="M9 1L8 3M11.4 2L10.4 4M12.6 4.4L11.8 6" stroke="#8fd0ff" stroke-width=".7"/><circle cx="11" cy="11" r="1.7" fill="#e8262c"/></g></svg>
<div class="t" style="left:823px;top:546px;font-size:8px;transform:translate(0.2px,0.6px) scaleX(0.881);color:#f1f3f5;-webkit-text-stroke:.25px #f1f3f5;">Regner nu</div>
<svg style="position:absolute;left:869px;top:549px;" width="7" height="4" viewBox="0 0 7 4"><g transform="translate(0.6 0.4)"><path d="M.4 3.2L3 .6L5.6 3.2" stroke="#f1f3f5" stroke-width="1" fill="none"/></g></svg>
<svg style="position:absolute;left:880px;top:547px;" width="10" height="10" viewBox="0 0 10 10"><g transform="translate(0.4 0)"><rect x=".5" y=".5" width="7.4" height="6" rx=".6" fill="none" stroke="#f1f3f5" stroke-width=".9"/><path d="M2.6 2.2V4.8M2.6 3.4H5.4" stroke="#f1f3f5" stroke-width=".8"/><circle cx="7.2" cy="7.2" r="1.7" fill="#3c9be8"/></g></svg>
<svg style="position:absolute;left:893px;top:547px;" width="10" height="9" viewBox="0 0 10 9"><g transform="translate(0 0.4)"><rect x="2" y=".5" width="6.8" height="4.8" fill="none" stroke="#f1f3f5" stroke-width=".9"/><path d="M.6 2.4V7.6H3M5.4 5.4V7.4M3.6 7.8H7.4" stroke="#f1f3f5" stroke-width=".9" fill="none"/></g></svg>
<svg style="position:absolute;left:905px;top:547px;" width="10" height="9" viewBox="0 0 10 9"><g transform="translate(0.4 0.6)"><path d="M.4 2.8H2L4.2 .6V7.4L2 5.2H.4Z" fill="none" stroke="#f1f3f5" stroke-width=".8"/><path d="M5.8 2.4L8.8 5.6M8.8 2.4L5.8 5.6" stroke="#f1f3f5" stroke-width=".8"/></g></svg>
<div class="t" style="left:919px;top:546px;font-size:7.4px;transform:translate(0.3px,0.6px) scaleX(0.813);color:#f1f3f5;-webkit-text-stroke:.2px #f1f3f5;">DAN</div>
<div class="t" style="left:946px;top:541px;font-size:7.2px;transform:translate(0.2px,0.8px) scaleX(0.783);color:#f1f3f5;-webkit-text-stroke:.25px #f1f3f5;">16:45</div>
<div class="t" style="left:938px;top:551px;font-size:7.2px;transform:translate(0.3px,0.2px) scaleX(0.812);color:#f1f3f5;-webkit-text-stroke:.25px #f1f3f5;">17-10-2022</div>
<svg style="position:absolute;left:977px;top:546px;will-change:transform;" width="11" height="12" viewBox="0 0 11 12"><g transform="translate(0.4 0)"><path d="M.5 .5H8.5V6.5H4L2.4 8.2V6.5H.5Z" fill="#e9edf0" stroke="#f1f3f5" stroke-width=".9"/><path d="M2 2.4H7M2 4.2H6" stroke="#8d98a3" stroke-width=".7"/><circle cx="7.6" cy="8.6" r="2.9" fill="#1e2a35" stroke="#f1f3f5" stroke-width=".7"/><text x="7.6" y="10.4" font-size="4.8" font-family="Liberation Sans,Arial,sans-serif" fill="#f1f3f5" text-anchor="middle">3</text></g></svg>
</div>
</div></body></html>
